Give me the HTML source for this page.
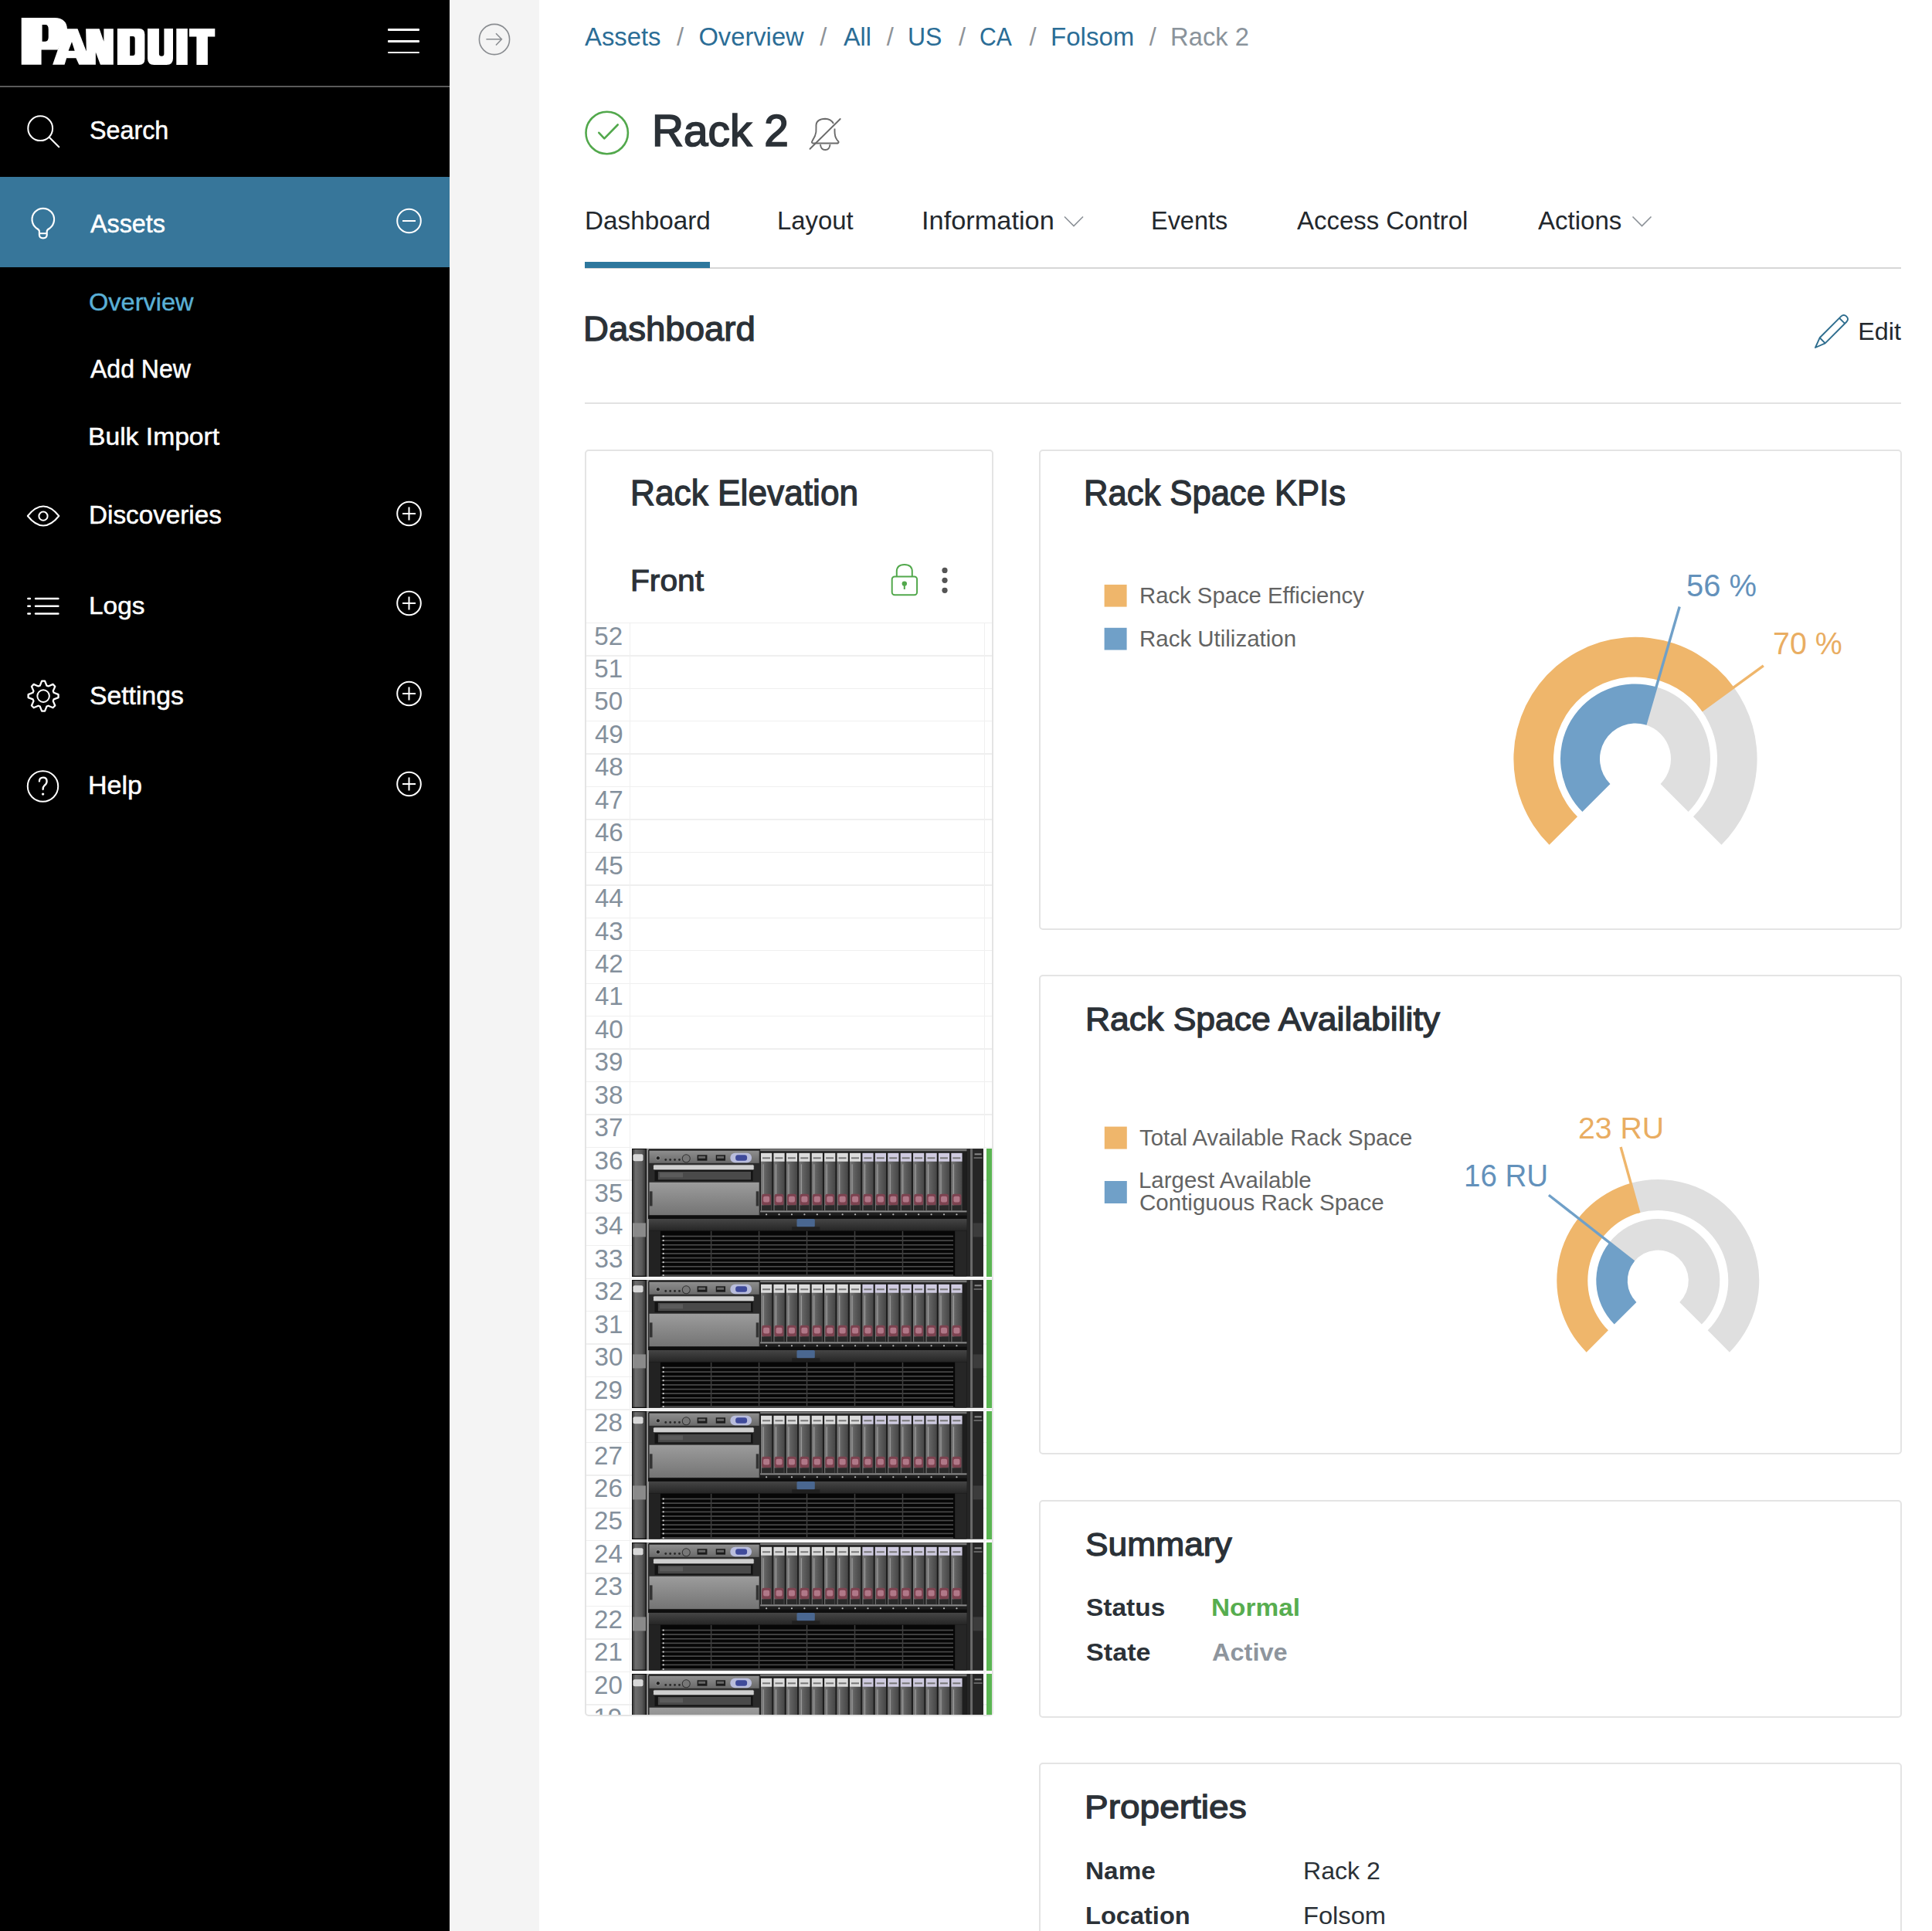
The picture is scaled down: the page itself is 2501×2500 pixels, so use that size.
<!DOCTYPE html>
<html><head><meta charset="utf-8"><title>Rack 2 - Dashboard</title>
<style>
html,body{margin:0;padding:0;}
body{width:2501px;height:2500px;position:relative;overflow:hidden;background:#fff;font-family:"Liberation Sans",sans-serif;}
.t{position:absolute;white-space:nowrap;transform-origin:0 0;}
.r{position:absolute;}
.ov{position:absolute;left:0;top:0;overflow:visible;}
.card{position:absolute;box-sizing:border-box;border:2px solid #e4e4e4;border-radius:5px;background:#fff;}
</style></head><body>
<div class="r" style="left:0.00px;top:0.00px;width:582.00px;height:2500.00px;background:#000;"></div>
<div class="r" style="left:582.00px;top:0.00px;width:116.30px;height:2500.00px;background:#f4f4f4;"></div>
<svg class="ov" width="2501" height="2500" viewBox="0 0 2501 2500"><g fill="#fff">
<path fill-rule="evenodd" d="M27.7,23 H70.8 Q86.5,23.5 87,37.5 L74.8,64.4 H53.6 V83.8 H27.7 Z M54.6,32.1 H58.7 Q62.7,32.1 62.7,38 V48 Q62.7,53.7 58.7,53.7 H54.6 Z"/>
<path d="M68.1,83.8 L84.2,37.2 H146.8 V83.8 Z"/>
<path fill-rule="evenodd" d="M151.9,37 H180 Q187.4,37 187.4,44.5 V76.5 Q187.4,84 180,84 H151.9 Z M168.2,47 H172 Q174.7,47 174.7,50 V69 Q174.7,72 172,72 H168.2 Z"/>
<path d="M191,37 H205.9 V69.5 Q205.9,72.8 209.2,72.8 Q212.4,72.8 212.4,69.5 V37 H224 V75.5 Q224,84 215.5,84 H199.5 Q191,84 191,75.5 Z"/>
<path d="M228.3,37 H242.8 V84 H228.3 Z"/>
<path d="M245,37 H278.3 V47.4 H268.9 V84 H254.4 V47.4 H245 Z"/>
</g>
<g fill="#000">
<path d="M93,54.3 L88.6,65.8 H96.7 Z"/>
<path d="M83.5,83.9 L86.2,75.2 H98.4 L102.4,83.9 Z"/>
<path d="M100.4,37 H111.1 L111.8,66.5 Z"/>
<path d="M128.6,37 H134.4 V53.7 Z"/>
<path d="M123.9,67.8 V84 H130 Z"/>
</g></svg>
<div class="r" style="left:501.70px;top:37.30px;width:41.20px;height:2.60px;background:#fff;border-radius:1px"></div>
<div class="r" style="left:501.70px;top:52.00px;width:41.20px;height:2.60px;background:#fff;border-radius:1px"></div>
<div class="r" style="left:501.70px;top:66.60px;width:41.20px;height:2.60px;background:#fff;border-radius:1px"></div>
<div class="r" style="left:0.00px;top:110.50px;width:582.00px;height:2.30px;background:#5a5a5a;"></div>
<div class="t" style="left:115.69px;top:152.24px;font-size:33.43px;line-height:33.43px;color:#fff;font-weight:400;transform:scaleX(0.9660);-webkit-text-stroke:0.50px #fff;">Search</div>
<div class="r" style="left:0.00px;top:229.00px;width:582.00px;height:117.20px;background:#37769a;"></div>
<div class="t" style="left:116.86px;top:272.51px;font-size:32.99px;line-height:32.99px;color:#fff;font-weight:400;transform:scaleX(0.9792);-webkit-text-stroke:0.50px #fff;">Assets</div>
<div class="t" style="left:115.36px;top:375.08px;font-size:32.27px;line-height:32.27px;color:#5ab0d6;font-weight:400;transform:scaleX(1.0081);-webkit-text-stroke:0.40px #5ab0d6;">Overview</div>
<div class="t" style="left:116.86px;top:462.06px;font-size:32.70px;line-height:32.70px;color:#fff;font-weight:400;transform:scaleX(0.9790);-webkit-text-stroke:0.50px #fff;">Add New</div>
<div class="t" style="left:114.19px;top:550.04px;font-size:31.54px;line-height:31.54px;color:#fff;font-weight:400;transform:scaleX(1.0669);-webkit-text-stroke:0.50px #fff;">Bulk Import</div>
<div class="t" style="left:114.51px;top:651.06px;font-size:32.70px;line-height:32.70px;color:#fff;font-weight:400;transform:scaleX(1.0172);-webkit-text-stroke:0.50px #fff;">Discoveries</div>
<div class="t" style="left:114.50px;top:768.13px;font-size:32.27px;line-height:32.27px;color:#fff;font-weight:400;transform:scaleX(1.0353);-webkit-text-stroke:0.50px #fff;">Logs</div>
<div class="t" style="left:115.74px;top:883.97px;font-size:33.29px;line-height:33.29px;color:#fff;font-weight:400;transform:scaleX(1.0129);-webkit-text-stroke:0.50px #fff;">Settings</div>
<div class="t" style="left:114.45px;top:1001.11px;font-size:32.41px;line-height:32.41px;color:#fff;font-weight:400;transform:scaleX(1.0501);-webkit-text-stroke:0.50px #fff;">Help</div>
<svg class="ov" width="2501" height="2500" viewBox="0 0 2501 2500"><circle cx="52.2" cy="166.2" r="15.9" fill="none" stroke="#fff" stroke-width="2"/><line x1="64.3" y1="178.3" x2="76.3" y2="190.3" stroke="#fff" stroke-width="2" stroke-linecap="round"/><path d="M50.9,304 V299.5 Q50.9,297.6 47.6,295.8 A14.3,14.3 0 1 1 64,295.8 Q60.7,297.6 60.7,299.5 V304 Q60.7,308.3 55.8,308.3 Q50.9,308.3 50.9,304 Z" fill="none" stroke="#fff" stroke-width="2.2" stroke-linejoin="round"/><line x1="50.9" y1="302.2" x2="60.7" y2="302.2" stroke="#fff" stroke-width="2"/><circle cx="529.5" cy="286" r="15.3" fill="none" stroke="#fff" stroke-width="2"/><line x1="521" y1="286" x2="538" y2="286" stroke="#fff" stroke-width="2"/><circle cx="529.5" cy="665" r="15.3" fill="none" stroke="#fff" stroke-width="2"/><line x1="521" y1="665" x2="538" y2="665" stroke="#fff" stroke-width="2"/><line x1="529.5" y1="656.5" x2="529.5" y2="673.5" stroke="#fff" stroke-width="2"/><circle cx="529.5" cy="781" r="15.3" fill="none" stroke="#fff" stroke-width="2"/><line x1="521" y1="781" x2="538" y2="781" stroke="#fff" stroke-width="2"/><line x1="529.5" y1="772.5" x2="529.5" y2="789.5" stroke="#fff" stroke-width="2"/><circle cx="529.5" cy="898" r="15.3" fill="none" stroke="#fff" stroke-width="2"/><line x1="521" y1="898" x2="538" y2="898" stroke="#fff" stroke-width="2"/><line x1="529.5" y1="889.5" x2="529.5" y2="906.5" stroke="#fff" stroke-width="2"/><circle cx="529.5" cy="1015" r="15.3" fill="none" stroke="#fff" stroke-width="2"/><line x1="521" y1="1015" x2="538" y2="1015" stroke="#fff" stroke-width="2"/><line x1="529.5" y1="1006.5" x2="529.5" y2="1023.5" stroke="#fff" stroke-width="2"/><path d="M35.8,668 Q56,643 76.3,668 Q56,693 35.8,668 Z" fill="none" stroke="#fff" stroke-width="2" stroke-linejoin="round"/><circle cx="56" cy="668.2" r="5.6" fill="none" stroke="#fff" stroke-width="2"/><line x1="36.3" y1="775" x2="38.9" y2="775" stroke="#fff" stroke-width="2.4" stroke-linecap="round"/><line x1="46" y1="775" x2="75.4" y2="775" stroke="#fff" stroke-width="2.4" stroke-linecap="round"/><line x1="36.3" y1="784.7" x2="38.9" y2="784.7" stroke="#fff" stroke-width="2.4" stroke-linecap="round"/><line x1="46" y1="784.7" x2="75.4" y2="784.7" stroke="#fff" stroke-width="2.4" stroke-linecap="round"/><line x1="36.3" y1="794.5" x2="38.9" y2="794.5" stroke="#fff" stroke-width="2.4" stroke-linecap="round"/><line x1="46" y1="794.5" x2="75.4" y2="794.5" stroke="#fff" stroke-width="2.4" stroke-linecap="round"/><polygon points="51.77,887.58 54.14,881.60 58.06,881.60 60.43,887.58 62.60,888.47 68.51,885.93 71.27,888.69 68.73,894.60 69.62,896.77 75.60,899.14 75.60,903.06 69.62,905.43 68.73,907.60 71.27,913.51 68.51,916.27 62.60,913.73 60.43,914.62 58.06,920.60 54.14,920.60 51.77,914.62 49.60,913.73 43.69,916.27 40.93,913.51 43.47,907.60 42.58,905.43 36.60,903.06 36.60,899.14 42.58,896.77 43.47,894.60 40.93,888.69 43.69,885.93 49.60,888.47" fill="none" stroke="#fff" stroke-width="2.3" stroke-linejoin="round"/><circle cx="56.1" cy="901.1" r="7.8" fill="none" stroke="#fff" stroke-width="2"/><circle cx="55.5" cy="1018" r="19.7" fill="none" stroke="#fff" stroke-width="2"/><path d="M50.9,1011.6 Q51,1006.7 55.8,1006.7 Q60.6,1006.7 60.6,1011.5 Q60.6,1014.6 57.6,1016.9 Q55.6,1018.6 55.6,1022" fill="none" stroke="#fff" stroke-width="2.3" stroke-linecap="round"/><circle cx="55.6" cy="1028.1" r="1.7" fill="#fff"/><circle cx="640" cy="51" r="19.6" fill="none" stroke="#8a8d91" stroke-width="1.6"/><path d="M629.4,50.8 H649.4 M642,43.3 L649.4,50.8 L642,58.5" fill="none" stroke="#8a8d91" stroke-width="1.6"/></svg>
<div class="t" style="left:756.82px;top:31.61px;font-size:32.70px;line-height:32.70px;color:#2b6d96;font-weight:400;transform:scaleX(1.0043);">Assets</div>
<div class="t" style="left:904.45px;top:31.61px;font-size:32.70px;line-height:32.70px;color:#2b6d96;font-weight:400;">Overview</div>
<div class="t" style="left:1091.72px;top:31.61px;font-size:32.70px;line-height:32.70px;color:#2b6d96;font-weight:400;transform:scaleX(0.9884);">All</div>
<div class="t" style="left:1174.52px;top:31.61px;font-size:32.70px;line-height:32.70px;color:#2b6d96;font-weight:400;transform:scaleX(0.9794);">US</div>
<div class="t" style="left:1267.89px;top:31.61px;font-size:32.70px;line-height:32.70px;color:#2b6d96;font-weight:400;transform:scaleX(0.9213);">CA</div>
<div class="t" style="left:1359.77px;top:31.61px;font-size:32.70px;line-height:32.70px;color:#2b6d96;font-weight:400;transform:scaleX(1.0111);">Folsom</div>
<div class="t" style="left:876.00px;top:31.61px;font-size:32.70px;line-height:32.70px;color:#8e9398;font-weight:400;">/</div>
<div class="t" style="left:1061.30px;top:31.61px;font-size:32.70px;line-height:32.70px;color:#8e9398;font-weight:400;">/</div>
<div class="t" style="left:1147.70px;top:31.61px;font-size:32.70px;line-height:32.70px;color:#8e9398;font-weight:400;">/</div>
<div class="t" style="left:1240.90px;top:31.61px;font-size:32.70px;line-height:32.70px;color:#8e9398;font-weight:400;">/</div>
<div class="t" style="left:1332.50px;top:31.61px;font-size:32.70px;line-height:32.70px;color:#8e9398;font-weight:400;">/</div>
<div class="t" style="left:1487.80px;top:31.61px;font-size:32.70px;line-height:32.70px;color:#8e9398;font-weight:400;">/</div>
<div class="t" style="left:1515.10px;top:31.61px;font-size:32.70px;line-height:32.70px;color:#8a939b;font-weight:400;">Rack 2</div>
<div class="t" style="left:843.55px;top:141.09px;font-size:57.70px;line-height:57.70px;color:#2b3137;font-weight:400;transform:scaleX(0.9844);-webkit-text-stroke:1.70px #2b3137;">Rack 2</div>
<div class="t" style="left:756.65px;top:269.81px;font-size:32.70px;line-height:32.70px;color:#23282d;font-weight:400;transform:scaleX(1.0175);">Dashboard</div>
<div class="t" style="left:1006.49px;top:269.81px;font-size:32.70px;line-height:32.70px;color:#23282d;font-weight:400;transform:scaleX(1.0047);">Layout</div>
<div class="t" style="left:1192.82px;top:269.81px;font-size:32.70px;line-height:32.70px;color:#23282d;font-weight:400;transform:scaleX(1.0503);">Information</div>
<div class="t" style="left:1490.32px;top:269.81px;font-size:32.70px;line-height:32.70px;color:#23282d;font-weight:400;transform:scaleX(0.9922);">Events</div>
<div class="t" style="left:1679.22px;top:269.81px;font-size:32.70px;line-height:32.70px;color:#23282d;font-weight:400;transform:scaleX(1.0071);">Access Control</div>
<div class="t" style="left:1990.82px;top:269.81px;font-size:32.70px;line-height:32.70px;color:#23282d;font-weight:400;transform:scaleX(1.0100);">Actions</div>
<div class="r" style="left:757.00px;top:346.00px;width:1704.00px;height:2.20px;background:#d6d6d6;"></div>
<div class="r" style="left:757.00px;top:339.00px;width:162.30px;height:7.50px;background:#2d779d;"></div>
<div class="t" style="left:754.90px;top:404.32px;font-size:44.91px;line-height:44.91px;color:#2b3137;font-weight:400;transform:scaleX(1.0144);-webkit-text-stroke:1.30px #2b3137;">Dashboard</div>
<div class="t" style="left:2405.33px;top:413.08px;font-size:32.27px;line-height:32.27px;color:#23282d;font-weight:400;">Edit</div>
<div class="r" style="left:757.00px;top:521.00px;width:1704.00px;height:2.00px;background:#e2e2e2;"></div>
<svg class="ov" width="2501" height="2500" viewBox="0 0 2501 2500"><circle cx="785.7" cy="172" r="27.2" fill="none" stroke="#52a84c" stroke-width="2.6"/><path d="M775.3,171.8 L782.3,179.3 L799.7,161.5" fill="none" stroke="#52a84c" stroke-width="2.6" stroke-linecap="round" stroke-linejoin="round"/><path d="M1084.5,185.5 H1052.5 Q1050,185 1051.5,182.5 L1055,176 Q1057,171 1056.5,165 V162 Q1057,154 1068.3,153.8 Q1075.5,154 1079,160" fill="none" stroke="#6b6b6b" stroke-width="1.9" stroke-linejoin="round"/><path d="M1080.5,166.5 V170 Q1080.5,177 1083.5,181 L1085.5,183.5 Q1086,185.5 1083.5,185.5" fill="none" stroke="#6b6b6b" stroke-width="1.9"/><path d="M1062,187 Q1062.5,194 1068.3,194 Q1074,194 1074.5,187" fill="none" stroke="#6b6b6b" stroke-width="1.9"/><line x1="1048.5" y1="192.8" x2="1087.7" y2="154" stroke="#6b6b6b" stroke-width="1.9" stroke-linecap="round"/><path d="M1378.0,280.5 L1390.0,292.5 L1402.0,280.5" fill="none" stroke="#8b9197" stroke-width="1.6"/><path d="M2113.5,280.5 L2125.5,292.5 L2137.5,280.5" fill="none" stroke="#8b9197" stroke-width="1.6"/><g transform="translate(2350,450) rotate(-45)"><path d="M0,0 L13,-5 H52 Q57,-5 57,0 Q57,5 52,5 H13 Z" fill="none" stroke="#2e6d8e" stroke-width="1.9" stroke-linejoin="round"/><line x1="13" y1="-5" x2="13" y2="5" stroke="#2e6d8e" stroke-width="1.9"/><line x1="49" y1="-5" x2="49" y2="5" stroke="#2e6d8e" stroke-width="1.9"/></g></svg>
<div class="card" style="left:756.6px;top:582.2px;width:529.6px;height:1639.8px;"></div>
<div class="card" style="left:1344.9px;top:582.2px;width:1117.2px;height:621.4px;"></div>
<div class="card" style="left:1344.9px;top:1262.4px;width:1117.2px;height:621.1px;"></div>
<div class="card" style="left:1344.9px;top:1941.8px;width:1117.2px;height:282.2px;"></div>
<div class="card" style="left:1344.9px;top:2282.0px;width:1117.2px;height:318.0px;"></div>
<div class="t" style="left:815.68px;top:616.45px;font-size:45.35px;line-height:45.35px;color:#2b3137;font-weight:400;transform:scaleX(0.9758);-webkit-text-stroke:1.30px #2b3137;">Rack Elevation</div>
<div class="t" style="left:815.91px;top:732.97px;font-size:38.95px;line-height:38.95px;color:#2b3137;font-weight:400;transform:scaleX(1.0457);-webkit-text-stroke:1.10px #2b3137;">Front</div>
<svg class="ov" width="2501" height="2500" viewBox="0 0 2501 2500"><rect x="1154.7" y="746.4" width="32.4" height="23.8" rx="3.5" fill="none" stroke="#52a84c" stroke-width="2"/><path d="M1160.8,746 V740 Q1160.8,731 1170.8,731 Q1180.8,731 1180.8,740 V746" fill="none" stroke="#52a84c" stroke-width="2"/><circle cx="1170.8" cy="755.6" r="3.2" fill="#52a84c"/><line x1="1170.8" y1="756" x2="1170.8" y2="763" stroke="#52a84c" stroke-width="2"/><circle cx="1223" cy="738.4" r="3.6" fill="#555"/><circle cx="1223" cy="751.3" r="3.6" fill="#555"/><circle cx="1223" cy="764.3" r="3.6" fill="#555"/></svg>
<div style="position:absolute;left:759px;top:805.5px;width:525px;height:1414.5px;overflow:hidden;"><div class="r" style="left:0;top:0.20px;width:525px;height:1.4px;background:#efefef"></div><div class="r" style="left:0;top:42.64px;width:525px;height:1.4px;background:#efefef"></div><div class="r" style="left:0;top:85.08px;width:525px;height:1.4px;background:#efefef"></div><div class="r" style="left:0;top:127.52px;width:525px;height:1.4px;background:#efefef"></div><div class="r" style="left:0;top:169.96px;width:525px;height:1.4px;background:#efefef"></div><div class="r" style="left:0;top:212.40px;width:525px;height:1.4px;background:#efefef"></div><div class="r" style="left:0;top:254.84px;width:525px;height:1.4px;background:#efefef"></div><div class="r" style="left:0;top:297.28px;width:525px;height:1.4px;background:#efefef"></div><div class="r" style="left:0;top:339.72px;width:525px;height:1.4px;background:#efefef"></div><div class="r" style="left:0;top:382.16px;width:525px;height:1.4px;background:#efefef"></div><div class="r" style="left:0;top:424.60px;width:525px;height:1.4px;background:#efefef"></div><div class="r" style="left:0;top:467.04px;width:525px;height:1.4px;background:#efefef"></div><div class="r" style="left:0;top:509.48px;width:525px;height:1.4px;background:#efefef"></div><div class="r" style="left:0;top:551.92px;width:525px;height:1.4px;background:#efefef"></div><div class="r" style="left:0;top:594.36px;width:525px;height:1.4px;background:#efefef"></div><div class="r" style="left:0;top:636.80px;width:525px;height:1.4px;background:#efefef"></div><div class="r" style="left:0;top:679.24px;width:525px;height:1.4px;background:#efefef"></div><div class="r" style="left:0;top:721.68px;width:525px;height:1.4px;background:#efefef"></div><div class="r" style="left:0;top:764.12px;width:525px;height:1.4px;background:#efefef"></div><div class="r" style="left:0;top:806.56px;width:525px;height:1.4px;background:#efefef"></div><div class="r" style="left:0;top:849.00px;width:525px;height:1.4px;background:#efefef"></div><div class="r" style="left:0;top:891.44px;width:525px;height:1.4px;background:#efefef"></div><div class="r" style="left:0;top:933.88px;width:525px;height:1.4px;background:#efefef"></div><div class="r" style="left:0;top:976.32px;width:525px;height:1.4px;background:#efefef"></div><div class="r" style="left:0;top:1018.76px;width:525px;height:1.4px;background:#efefef"></div><div class="r" style="left:0;top:1061.20px;width:525px;height:1.4px;background:#efefef"></div><div class="r" style="left:0;top:1103.64px;width:525px;height:1.4px;background:#efefef"></div><div class="r" style="left:0;top:1146.08px;width:525px;height:1.4px;background:#efefef"></div><div class="r" style="left:0;top:1188.52px;width:525px;height:1.4px;background:#efefef"></div><div class="r" style="left:0;top:1230.96px;width:525px;height:1.4px;background:#efefef"></div><div class="r" style="left:0;top:1273.40px;width:525px;height:1.4px;background:#efefef"></div><div class="r" style="left:0;top:1315.84px;width:525px;height:1.4px;background:#efefef"></div><div class="r" style="left:0;top:1358.28px;width:525px;height:1.4px;background:#efefef"></div><div class="r" style="left:0;top:1400.72px;width:525px;height:1.4px;background:#efefef"></div><div class="r" style="left:0;top:1443.16px;width:525px;height:1.4px;background:#efefef"></div><div class="r" style="left:0;top:1485.60px;width:525px;height:1.4px;background:#efefef"></div><div class="r" style="left:0;top:1528.04px;width:525px;height:1.4px;background:#efefef"></div><div class="r" style="left:0;top:1570.48px;width:525px;height:1.4px;background:#efefef"></div><div class="r" style="left:0;top:1612.92px;width:525px;height:1.4px;background:#efefef"></div><div class="r" style="left:0;top:1655.36px;width:525px;height:1.4px;background:#efefef"></div><div class="r" style="left:55.8px;top:0;width:1.4px;height:2000px;background:#f0f0f0"></div><div class="r" style="left:515px;top:0;width:1.4px;height:2000px;background:#f0f0f0"></div>
<div class="t" style="left:10.37px;top:1.04px;font-size:33.14px;line-height:33.14px;color:#84909c;font-weight:400;">52</div>
<div class="t" style="left:10.37px;top:43.48px;font-size:33.14px;line-height:33.14px;color:#84909c;font-weight:400;">51</div>
<div class="t" style="left:10.37px;top:85.92px;font-size:33.14px;line-height:33.14px;color:#84909c;font-weight:400;">50</div>
<div class="t" style="left:10.95px;top:128.36px;font-size:33.14px;line-height:33.14px;color:#84909c;font-weight:400;">49</div>
<div class="t" style="left:10.95px;top:170.80px;font-size:33.14px;line-height:33.14px;color:#84909c;font-weight:400;">48</div>
<div class="t" style="left:10.95px;top:213.24px;font-size:33.14px;line-height:33.14px;color:#84909c;font-weight:400;">47</div>
<div class="t" style="left:10.95px;top:255.68px;font-size:33.14px;line-height:33.14px;color:#84909c;font-weight:400;">46</div>
<div class="t" style="left:10.95px;top:298.12px;font-size:33.14px;line-height:33.14px;color:#84909c;font-weight:400;">45</div>
<div class="t" style="left:10.95px;top:340.56px;font-size:33.14px;line-height:33.14px;color:#84909c;font-weight:400;">44</div>
<div class="t" style="left:10.95px;top:383.00px;font-size:33.14px;line-height:33.14px;color:#84909c;font-weight:400;">43</div>
<div class="t" style="left:10.95px;top:425.44px;font-size:33.14px;line-height:33.14px;color:#84909c;font-weight:400;">42</div>
<div class="t" style="left:10.95px;top:467.88px;font-size:33.14px;line-height:33.14px;color:#84909c;font-weight:400;">41</div>
<div class="t" style="left:10.95px;top:510.32px;font-size:33.14px;line-height:33.14px;color:#84909c;font-weight:400;">40</div>
<div class="t" style="left:10.46px;top:552.76px;font-size:33.14px;line-height:33.14px;color:#84909c;font-weight:400;">39</div>
<div class="t" style="left:10.46px;top:595.20px;font-size:33.14px;line-height:33.14px;color:#84909c;font-weight:400;">38</div>
<div class="t" style="left:10.46px;top:637.64px;font-size:33.14px;line-height:33.14px;color:#84909c;font-weight:400;">37</div>
<div class="t" style="left:10.46px;top:680.08px;font-size:33.14px;line-height:33.14px;color:#84909c;font-weight:400;">36</div>
<div class="t" style="left:10.46px;top:722.52px;font-size:33.14px;line-height:33.14px;color:#84909c;font-weight:400;">35</div>
<div class="t" style="left:10.46px;top:764.96px;font-size:33.14px;line-height:33.14px;color:#84909c;font-weight:400;">34</div>
<div class="t" style="left:10.46px;top:807.40px;font-size:33.14px;line-height:33.14px;color:#84909c;font-weight:400;">33</div>
<div class="t" style="left:10.46px;top:849.84px;font-size:33.14px;line-height:33.14px;color:#84909c;font-weight:400;">32</div>
<div class="t" style="left:10.46px;top:892.28px;font-size:33.14px;line-height:33.14px;color:#84909c;font-weight:400;">31</div>
<div class="t" style="left:10.46px;top:934.72px;font-size:33.14px;line-height:33.14px;color:#84909c;font-weight:400;">30</div>
<div class="t" style="left:10.04px;top:977.16px;font-size:33.14px;line-height:33.14px;color:#84909c;font-weight:400;">29</div>
<div class="t" style="left:10.04px;top:1019.60px;font-size:33.14px;line-height:33.14px;color:#84909c;font-weight:400;">28</div>
<div class="t" style="left:10.04px;top:1062.04px;font-size:33.14px;line-height:33.14px;color:#84909c;font-weight:400;">27</div>
<div class="t" style="left:10.04px;top:1104.48px;font-size:33.14px;line-height:33.14px;color:#84909c;font-weight:400;">26</div>
<div class="t" style="left:10.04px;top:1146.92px;font-size:33.14px;line-height:33.14px;color:#84909c;font-weight:400;">25</div>
<div class="t" style="left:10.04px;top:1189.36px;font-size:33.14px;line-height:33.14px;color:#84909c;font-weight:400;">24</div>
<div class="t" style="left:10.04px;top:1231.80px;font-size:33.14px;line-height:33.14px;color:#84909c;font-weight:400;">23</div>
<div class="t" style="left:10.04px;top:1274.24px;font-size:33.14px;line-height:33.14px;color:#84909c;font-weight:400;">22</div>
<div class="t" style="left:10.04px;top:1316.68px;font-size:33.14px;line-height:33.14px;color:#84909c;font-weight:400;">21</div>
<div class="t" style="left:10.04px;top:1359.12px;font-size:33.14px;line-height:33.14px;color:#84909c;font-weight:400;">20</div>
<div class="t" style="left:9.21px;top:1401.56px;font-size:33.14px;line-height:33.14px;color:#84909c;font-weight:400;">19</div>
<div class="t" style="left:9.21px;top:1444.00px;font-size:33.14px;line-height:33.14px;color:#84909c;font-weight:400;">18</div>
<svg class="r" style="left:58.5px;top:681.30px" width="455.6" height="165.8" viewBox="0 0 455 165"><defs><linearGradient id="gEar" x1="0" x2="1" y1="0" y2="0"><stop offset="0" stop-color="#2a2a2a"/><stop offset="0.25" stop-color="#6e6e6e"/><stop offset="0.7" stop-color="#5a5a5a"/><stop offset="1" stop-color="#2e2e2e"/></linearGradient><linearGradient id="gBlank" x1="0" x2="0" y1="0" y2="1"><stop offset="0" stop-color="#9c9c9c"/><stop offset="1" stop-color="#747474"/></linearGradient><linearGradient id="gCtrl" x1="0" x2="0" y1="0" y2="1"><stop offset="0" stop-color="#8e8e8e"/><stop offset="1" stop-color="#6a6a6a"/></linearGradient><linearGradient id="gDrive" x1="0" x2="1" y1="0" y2="0"><stop offset="0" stop-color="#7a7a7a"/><stop offset="0.45" stop-color="#5e5e5e"/><stop offset="1" stop-color="#464646"/></linearGradient><linearGradient id="gBand" x1="0" x2="0" y1="0" y2="1"><stop offset="0" stop-color="#454545"/><stop offset="1" stop-color="#262626"/></linearGradient></defs><rect x="0" y="0" width="455" height="165" fill="#161616"/><rect x="0" y="0" width="18.5" height="165" fill="url(#gEar)"/><rect x="0" y="0" width="18.5" height="165" fill="none" stroke="#111" stroke-width="1.6"/><rect x="1.5" y="7" width="13" height="9" rx="2" fill="#d8d8d8"/><rect x="1" y="96" width="17" height="18" fill="#8a8a8a"/><rect x="19" y="0" width="3" height="165" fill="#8e8e8e"/><rect x="433" y="0" width="22" height="165" fill="#262626"/><rect x="437.5" y="0" width="3" height="165" fill="#6a6a6a"/><rect x="441" y="96" width="13" height="18" fill="#3c3c3c"/><rect x="443" y="6" width="9" height="2" fill="#888"/><rect x="442" y="11" width="11" height="1.5" fill="#777"/><rect x="21" y="1.5" width="145" height="86" fill="#2a2a2a"/><rect x="22.5" y="2.5" width="142" height="16" fill="url(#gCtrl)"/><circle cx="33.8" cy="12" r="2.6" fill="#1e1e1e" stroke="#aaa" stroke-width="0.7"/><circle cx="43.7" cy="14.2" r="1.4" fill="#2a2a2a"/><circle cx="49.6" cy="14.2" r="1.4" fill="#2a2a2a"/><circle cx="55.5" cy="14.2" r="1.4" fill="#2a2a2a"/><circle cx="61.4" cy="14.2" r="1.4" fill="#2a2a2a"/><circle cx="70.2" cy="12.5" r="5" fill="#777" stroke="#333" stroke-width="1"/><rect x="84.5" y="8" width="12.8" height="7.4" fill="#1c1c1c"/><rect x="86" y="9.5" width="9" height="3" fill="#666"/><rect x="108.6" y="8" width="12.3" height="7.4" fill="#1c1c1c"/><rect x="110" y="9.5" width="9" height="3" fill="#666"/><rect x="127.2" y="5.5" width="27.6" height="12.5" rx="6" fill="#b9bddc"/><rect x="134" y="8" width="14.9" height="7.5" rx="3" fill="#3f4a9a"/><rect x="27.5" y="20.5" width="130.5" height="7" rx="1.5" fill="#cfcfcf" stroke="#222" stroke-width="0.8"/><rect x="29.5" y="27.7" width="127" height="14" fill="#141414"/><rect x="33.8" y="29.5" width="120" height="10.5" fill="#4a4a4a"/><rect x="36" y="31" width="30" height="6" fill="#5c5c5c"/><rect x="22.5" y="43.4" width="142" height="42.3" fill="url(#gBlank)"/><rect x="23" y="55" width="3.5" height="19" fill="#333"/><rect x="160.5" y="55" width="3.5" height="19" fill="#333"/><rect x="165.9" y="0.5" width="267" height="87.5" fill="#1e1e1e"/><rect x="165.9" y="0.5" width="267" height="2.5" fill="#777"/><rect x="166.80" y="16.4" width="14.2" height="63.6" fill="url(#gDrive)"/><rect x="166.80" y="5.5" width="14.2" height="11" fill="#dcdcdc"/><rect x="168.80" y="11" width="10" height="2" fill="#777"/><rect x="169.30" y="20" width="1.2" height="56" fill="#9a9a9a"/><rect x="167.90" y="58.5" width="12" height="14.5" rx="3" fill="#7c4350"/><rect x="169.90" y="61.5" width="8" height="7.5" rx="2" fill="#b07888"/><rect x="167.90" y="73" width="12" height="7" fill="#2a2a2a"/><circle cx="173.90" cy="85" r="1.1" fill="#bbb"/><rect x="183.20" y="16.4" width="14.2" height="63.6" fill="url(#gDrive)"/><rect x="183.20" y="5.5" width="14.2" height="11" fill="#dcdcdc"/><rect x="185.20" y="11" width="10" height="2" fill="#777"/><rect x="185.70" y="20" width="1.2" height="56" fill="#9a9a9a"/><rect x="184.30" y="58.5" width="12" height="14.5" rx="3" fill="#7c4350"/><rect x="186.30" y="61.5" width="8" height="7.5" rx="2" fill="#b07888"/><rect x="184.30" y="73" width="12" height="7" fill="#2a2a2a"/><circle cx="190.30" cy="85" r="1.1" fill="#bbb"/><rect x="199.60" y="16.4" width="14.2" height="63.6" fill="url(#gDrive)"/><rect x="199.60" y="5.5" width="14.2" height="11" fill="#dcdcdc"/><rect x="201.60" y="11" width="10" height="2" fill="#777"/><rect x="202.10" y="20" width="1.2" height="56" fill="#9a9a9a"/><rect x="200.70" y="58.5" width="12" height="14.5" rx="3" fill="#7c4350"/><rect x="202.70" y="61.5" width="8" height="7.5" rx="2" fill="#b07888"/><rect x="200.70" y="73" width="12" height="7" fill="#2a2a2a"/><circle cx="206.70" cy="85" r="1.1" fill="#bbb"/><rect x="216.00" y="16.4" width="14.2" height="63.6" fill="url(#gDrive)"/><rect x="216.00" y="5.5" width="14.2" height="11" fill="#dcdcdc"/><rect x="218.00" y="11" width="10" height="2" fill="#777"/><rect x="218.50" y="20" width="1.2" height="56" fill="#9a9a9a"/><rect x="217.10" y="58.5" width="12" height="14.5" rx="3" fill="#7c4350"/><rect x="219.10" y="61.5" width="8" height="7.5" rx="2" fill="#b07888"/><rect x="217.10" y="73" width="12" height="7" fill="#2a2a2a"/><circle cx="223.10" cy="85" r="1.1" fill="#bbb"/><rect x="232.40" y="16.4" width="14.2" height="63.6" fill="url(#gDrive)"/><rect x="232.40" y="5.5" width="14.2" height="11" fill="#dcdcdc"/><rect x="234.40" y="11" width="10" height="2" fill="#777"/><rect x="234.90" y="20" width="1.2" height="56" fill="#9a9a9a"/><rect x="233.50" y="58.5" width="12" height="14.5" rx="3" fill="#7c4350"/><rect x="235.50" y="61.5" width="8" height="7.5" rx="2" fill="#b07888"/><rect x="233.50" y="73" width="12" height="7" fill="#2a2a2a"/><circle cx="239.50" cy="85" r="1.1" fill="#bbb"/><rect x="248.80" y="16.4" width="14.2" height="63.6" fill="url(#gDrive)"/><rect x="248.80" y="5.5" width="14.2" height="11" fill="#dcdcdc"/><rect x="250.80" y="11" width="10" height="2" fill="#777"/><rect x="251.30" y="20" width="1.2" height="56" fill="#9a9a9a"/><rect x="249.90" y="58.5" width="12" height="14.5" rx="3" fill="#7c4350"/><rect x="251.90" y="61.5" width="8" height="7.5" rx="2" fill="#b07888"/><rect x="249.90" y="73" width="12" height="7" fill="#2a2a2a"/><circle cx="255.90" cy="85" r="1.1" fill="#bbb"/><rect x="265.20" y="16.4" width="14.2" height="63.6" fill="url(#gDrive)"/><rect x="265.20" y="5.5" width="14.2" height="11" fill="#dcdcdc"/><rect x="267.20" y="11" width="10" height="2" fill="#777"/><rect x="267.70" y="20" width="1.2" height="56" fill="#9a9a9a"/><rect x="266.30" y="58.5" width="12" height="14.5" rx="3" fill="#7c4350"/><rect x="268.30" y="61.5" width="8" height="7.5" rx="2" fill="#b07888"/><rect x="266.30" y="73" width="12" height="7" fill="#2a2a2a"/><circle cx="272.30" cy="85" r="1.1" fill="#bbb"/><rect x="281.60" y="16.4" width="14.2" height="63.6" fill="url(#gDrive)"/><rect x="281.60" y="5.5" width="14.2" height="11" fill="#dcdcdc"/><rect x="283.60" y="11" width="10" height="2" fill="#777"/><rect x="284.10" y="20" width="1.2" height="56" fill="#9a9a9a"/><rect x="282.70" y="58.5" width="12" height="14.5" rx="3" fill="#7c4350"/><rect x="284.70" y="61.5" width="8" height="7.5" rx="2" fill="#b07888"/><rect x="282.70" y="73" width="12" height="7" fill="#2a2a2a"/><circle cx="288.70" cy="85" r="1.1" fill="#bbb"/><rect x="298.00" y="16.4" width="14.2" height="63.6" fill="url(#gDrive)"/><rect x="298.00" y="5.5" width="14.2" height="11" fill="#cfcbe0"/><rect x="300.00" y="11" width="10" height="2" fill="#777"/><rect x="300.50" y="20" width="1.2" height="56" fill="#9a9a9a"/><rect x="299.10" y="58.5" width="12" height="14.5" rx="3" fill="#7c4350"/><rect x="301.10" y="61.5" width="8" height="7.5" rx="2" fill="#b07888"/><rect x="299.10" y="73" width="12" height="7" fill="#2a2a2a"/><circle cx="305.10" cy="85" r="1.1" fill="#bbb"/><rect x="314.40" y="16.4" width="14.2" height="63.6" fill="url(#gDrive)"/><rect x="314.40" y="5.5" width="14.2" height="11" fill="#cfcbe0"/><rect x="316.40" y="11" width="10" height="2" fill="#777"/><rect x="316.90" y="20" width="1.2" height="56" fill="#9a9a9a"/><rect x="315.50" y="58.5" width="12" height="14.5" rx="3" fill="#7c4350"/><rect x="317.50" y="61.5" width="8" height="7.5" rx="2" fill="#b07888"/><rect x="315.50" y="73" width="12" height="7" fill="#2a2a2a"/><circle cx="321.50" cy="85" r="1.1" fill="#bbb"/><rect x="330.80" y="16.4" width="14.2" height="63.6" fill="url(#gDrive)"/><rect x="330.80" y="5.5" width="14.2" height="11" fill="#cfcbe0"/><rect x="332.80" y="11" width="10" height="2" fill="#777"/><rect x="333.30" y="20" width="1.2" height="56" fill="#9a9a9a"/><rect x="331.90" y="58.5" width="12" height="14.5" rx="3" fill="#7c4350"/><rect x="333.90" y="61.5" width="8" height="7.5" rx="2" fill="#b07888"/><rect x="331.90" y="73" width="12" height="7" fill="#2a2a2a"/><circle cx="337.90" cy="85" r="1.1" fill="#bbb"/><rect x="347.20" y="16.4" width="14.2" height="63.6" fill="url(#gDrive)"/><rect x="347.20" y="5.5" width="14.2" height="11" fill="#cfcbe0"/><rect x="349.20" y="11" width="10" height="2" fill="#777"/><rect x="349.70" y="20" width="1.2" height="56" fill="#9a9a9a"/><rect x="348.30" y="58.5" width="12" height="14.5" rx="3" fill="#7c4350"/><rect x="350.30" y="61.5" width="8" height="7.5" rx="2" fill="#b07888"/><rect x="348.30" y="73" width="12" height="7" fill="#2a2a2a"/><circle cx="354.30" cy="85" r="1.1" fill="#bbb"/><rect x="363.60" y="16.4" width="14.2" height="63.6" fill="url(#gDrive)"/><rect x="363.60" y="5.5" width="14.2" height="11" fill="#cfcbe0"/><rect x="365.60" y="11" width="10" height="2" fill="#777"/><rect x="366.10" y="20" width="1.2" height="56" fill="#9a9a9a"/><rect x="364.70" y="58.5" width="12" height="14.5" rx="3" fill="#7c4350"/><rect x="366.70" y="61.5" width="8" height="7.5" rx="2" fill="#b07888"/><rect x="364.70" y="73" width="12" height="7" fill="#2a2a2a"/><circle cx="370.70" cy="85" r="1.1" fill="#bbb"/><rect x="380.00" y="16.4" width="14.2" height="63.6" fill="url(#gDrive)"/><rect x="380.00" y="5.5" width="14.2" height="11" fill="#cfcbe0"/><rect x="382.00" y="11" width="10" height="2" fill="#777"/><rect x="382.50" y="20" width="1.2" height="56" fill="#9a9a9a"/><rect x="381.10" y="58.5" width="12" height="14.5" rx="3" fill="#7c4350"/><rect x="383.10" y="61.5" width="8" height="7.5" rx="2" fill="#b07888"/><rect x="381.10" y="73" width="12" height="7" fill="#2a2a2a"/><circle cx="387.10" cy="85" r="1.1" fill="#bbb"/><rect x="396.40" y="16.4" width="14.2" height="63.6" fill="url(#gDrive)"/><rect x="396.40" y="5.5" width="14.2" height="11" fill="#cfcbe0"/><rect x="398.40" y="11" width="10" height="2" fill="#777"/><rect x="398.90" y="20" width="1.2" height="56" fill="#9a9a9a"/><rect x="397.50" y="58.5" width="12" height="14.5" rx="3" fill="#7c4350"/><rect x="399.50" y="61.5" width="8" height="7.5" rx="2" fill="#b07888"/><rect x="397.50" y="73" width="12" height="7" fill="#2a2a2a"/><circle cx="403.50" cy="85" r="1.1" fill="#bbb"/><rect x="412.80" y="16.4" width="14.2" height="63.6" fill="url(#gDrive)"/><rect x="412.80" y="5.5" width="14.2" height="11" fill="#cfcbe0"/><rect x="414.80" y="11" width="10" height="2" fill="#777"/><rect x="415.30" y="20" width="1.2" height="56" fill="#9a9a9a"/><rect x="413.90" y="58.5" width="12" height="14.5" rx="3" fill="#7c4350"/><rect x="415.90" y="61.5" width="8" height="7.5" rx="2" fill="#b07888"/><rect x="413.90" y="73" width="12" height="7" fill="#2a2a2a"/><circle cx="419.90" cy="85" r="1.1" fill="#bbb"/><rect x="165.9" y="80" width="267" height="2" fill="#8a8a8a"/><rect x="21" y="86.2" width="412" height="4.5" fill="#0e0e0e"/><rect x="22" y="90.6" width="411" height="15" fill="url(#gBand)"/><rect x="213.2" y="90.6" width="23.3" height="10.5" rx="1.5" fill="#4a6790"/><rect x="207" y="101" width="36" height="5" fill="#202020"/><rect x="22" y="105.6" width="411" height="59.4" fill="#1a1a1a"/><rect x="36.8" y="106.4" width="381" height="57" fill="#060606"/><rect x="38.5" y="112.3" width="377" height="1.6" fill="#4c4c4c"/><circle cx="40.7" cy="113.1" r="1.1" fill="#cfcfcf"/><rect x="38.5" y="117.9" width="377" height="1.6" fill="#4c4c4c"/><circle cx="40.7" cy="118.7" r="1.1" fill="#cfcfcf"/><rect x="38.5" y="123.5" width="377" height="1.6" fill="#4c4c4c"/><circle cx="40.7" cy="124.3" r="1.1" fill="#cfcfcf"/><rect x="38.5" y="129.1" width="377" height="1.6" fill="#4c4c4c"/><circle cx="40.7" cy="129.9" r="1.1" fill="#cfcfcf"/><rect x="38.5" y="134.7" width="377" height="1.6" fill="#4c4c4c"/><circle cx="40.7" cy="135.5" r="1.1" fill="#cfcfcf"/><rect x="38.5" y="140.3" width="377" height="1.6" fill="#4c4c4c"/><circle cx="40.7" cy="141.1" r="1.1" fill="#cfcfcf"/><rect x="38.5" y="145.9" width="377" height="1.6" fill="#4c4c4c"/><circle cx="40.7" cy="146.7" r="1.1" fill="#cfcfcf"/><rect x="38.5" y="151.5" width="377" height="1.6" fill="#4c4c4c"/><circle cx="40.7" cy="152.3" r="1.1" fill="#cfcfcf"/><rect x="38.5" y="157.1" width="377" height="1.6" fill="#4c4c4c"/><circle cx="40.7" cy="157.9" r="1.1" fill="#cfcfcf"/><rect x="38.5" y="162.7" width="377" height="1.6" fill="#4c4c4c"/><circle cx="40.7" cy="163.5" r="1.1" fill="#cfcfcf"/><rect x="101.7" y="106.4" width="1.5" height="57" fill="#3e3e3e"/><rect x="163.6" y="106.4" width="1.5" height="57" fill="#3e3e3e"/><rect x="225.5" y="106.4" width="1.5" height="57" fill="#3e3e3e"/><rect x="287.4" y="106.4" width="1.5" height="57" fill="#3e3e3e"/><rect x="349.3" y="106.4" width="1.5" height="57" fill="#3e3e3e"/><rect x="22" y="106" width="14.8" height="59" fill="#222"/><rect x="417.8" y="106" width="15" height="59" fill="#262626"/></svg>
<div class="r" style="left:518.0px;top:681.30px;width:6.8px;height:165.8px;background:#5ab552"></div>
<svg class="r" style="left:58.5px;top:851.40px" width="455.6" height="165.8" viewBox="0 0 455 165"><defs><linearGradient id="gEar" x1="0" x2="1" y1="0" y2="0"><stop offset="0" stop-color="#2a2a2a"/><stop offset="0.25" stop-color="#6e6e6e"/><stop offset="0.7" stop-color="#5a5a5a"/><stop offset="1" stop-color="#2e2e2e"/></linearGradient><linearGradient id="gBlank" x1="0" x2="0" y1="0" y2="1"><stop offset="0" stop-color="#9c9c9c"/><stop offset="1" stop-color="#747474"/></linearGradient><linearGradient id="gCtrl" x1="0" x2="0" y1="0" y2="1"><stop offset="0" stop-color="#8e8e8e"/><stop offset="1" stop-color="#6a6a6a"/></linearGradient><linearGradient id="gDrive" x1="0" x2="1" y1="0" y2="0"><stop offset="0" stop-color="#7a7a7a"/><stop offset="0.45" stop-color="#5e5e5e"/><stop offset="1" stop-color="#464646"/></linearGradient><linearGradient id="gBand" x1="0" x2="0" y1="0" y2="1"><stop offset="0" stop-color="#454545"/><stop offset="1" stop-color="#262626"/></linearGradient></defs><rect x="0" y="0" width="455" height="165" fill="#161616"/><rect x="0" y="0" width="18.5" height="165" fill="url(#gEar)"/><rect x="0" y="0" width="18.5" height="165" fill="none" stroke="#111" stroke-width="1.6"/><rect x="1.5" y="7" width="13" height="9" rx="2" fill="#d8d8d8"/><rect x="1" y="96" width="17" height="18" fill="#8a8a8a"/><rect x="19" y="0" width="3" height="165" fill="#8e8e8e"/><rect x="433" y="0" width="22" height="165" fill="#262626"/><rect x="437.5" y="0" width="3" height="165" fill="#6a6a6a"/><rect x="441" y="96" width="13" height="18" fill="#3c3c3c"/><rect x="443" y="6" width="9" height="2" fill="#888"/><rect x="442" y="11" width="11" height="1.5" fill="#777"/><rect x="21" y="1.5" width="145" height="86" fill="#2a2a2a"/><rect x="22.5" y="2.5" width="142" height="16" fill="url(#gCtrl)"/><circle cx="33.8" cy="12" r="2.6" fill="#1e1e1e" stroke="#aaa" stroke-width="0.7"/><circle cx="43.7" cy="14.2" r="1.4" fill="#2a2a2a"/><circle cx="49.6" cy="14.2" r="1.4" fill="#2a2a2a"/><circle cx="55.5" cy="14.2" r="1.4" fill="#2a2a2a"/><circle cx="61.4" cy="14.2" r="1.4" fill="#2a2a2a"/><circle cx="70.2" cy="12.5" r="5" fill="#777" stroke="#333" stroke-width="1"/><rect x="84.5" y="8" width="12.8" height="7.4" fill="#1c1c1c"/><rect x="86" y="9.5" width="9" height="3" fill="#666"/><rect x="108.6" y="8" width="12.3" height="7.4" fill="#1c1c1c"/><rect x="110" y="9.5" width="9" height="3" fill="#666"/><rect x="127.2" y="5.5" width="27.6" height="12.5" rx="6" fill="#b9bddc"/><rect x="134" y="8" width="14.9" height="7.5" rx="3" fill="#3f4a9a"/><rect x="27.5" y="20.5" width="130.5" height="7" rx="1.5" fill="#cfcfcf" stroke="#222" stroke-width="0.8"/><rect x="29.5" y="27.7" width="127" height="14" fill="#141414"/><rect x="33.8" y="29.5" width="120" height="10.5" fill="#4a4a4a"/><rect x="36" y="31" width="30" height="6" fill="#5c5c5c"/><rect x="22.5" y="43.4" width="142" height="42.3" fill="url(#gBlank)"/><rect x="23" y="55" width="3.5" height="19" fill="#333"/><rect x="160.5" y="55" width="3.5" height="19" fill="#333"/><rect x="165.9" y="0.5" width="267" height="87.5" fill="#1e1e1e"/><rect x="165.9" y="0.5" width="267" height="2.5" fill="#777"/><rect x="166.80" y="16.4" width="14.2" height="63.6" fill="url(#gDrive)"/><rect x="166.80" y="5.5" width="14.2" height="11" fill="#dcdcdc"/><rect x="168.80" y="11" width="10" height="2" fill="#777"/><rect x="169.30" y="20" width="1.2" height="56" fill="#9a9a9a"/><rect x="167.90" y="58.5" width="12" height="14.5" rx="3" fill="#7c4350"/><rect x="169.90" y="61.5" width="8" height="7.5" rx="2" fill="#b07888"/><rect x="167.90" y="73" width="12" height="7" fill="#2a2a2a"/><circle cx="173.90" cy="85" r="1.1" fill="#bbb"/><rect x="183.20" y="16.4" width="14.2" height="63.6" fill="url(#gDrive)"/><rect x="183.20" y="5.5" width="14.2" height="11" fill="#dcdcdc"/><rect x="185.20" y="11" width="10" height="2" fill="#777"/><rect x="185.70" y="20" width="1.2" height="56" fill="#9a9a9a"/><rect x="184.30" y="58.5" width="12" height="14.5" rx="3" fill="#7c4350"/><rect x="186.30" y="61.5" width="8" height="7.5" rx="2" fill="#b07888"/><rect x="184.30" y="73" width="12" height="7" fill="#2a2a2a"/><circle cx="190.30" cy="85" r="1.1" fill="#bbb"/><rect x="199.60" y="16.4" width="14.2" height="63.6" fill="url(#gDrive)"/><rect x="199.60" y="5.5" width="14.2" height="11" fill="#dcdcdc"/><rect x="201.60" y="11" width="10" height="2" fill="#777"/><rect x="202.10" y="20" width="1.2" height="56" fill="#9a9a9a"/><rect x="200.70" y="58.5" width="12" height="14.5" rx="3" fill="#7c4350"/><rect x="202.70" y="61.5" width="8" height="7.5" rx="2" fill="#b07888"/><rect x="200.70" y="73" width="12" height="7" fill="#2a2a2a"/><circle cx="206.70" cy="85" r="1.1" fill="#bbb"/><rect x="216.00" y="16.4" width="14.2" height="63.6" fill="url(#gDrive)"/><rect x="216.00" y="5.5" width="14.2" height="11" fill="#dcdcdc"/><rect x="218.00" y="11" width="10" height="2" fill="#777"/><rect x="218.50" y="20" width="1.2" height="56" fill="#9a9a9a"/><rect x="217.10" y="58.5" width="12" height="14.5" rx="3" fill="#7c4350"/><rect x="219.10" y="61.5" width="8" height="7.5" rx="2" fill="#b07888"/><rect x="217.10" y="73" width="12" height="7" fill="#2a2a2a"/><circle cx="223.10" cy="85" r="1.1" fill="#bbb"/><rect x="232.40" y="16.4" width="14.2" height="63.6" fill="url(#gDrive)"/><rect x="232.40" y="5.5" width="14.2" height="11" fill="#dcdcdc"/><rect x="234.40" y="11" width="10" height="2" fill="#777"/><rect x="234.90" y="20" width="1.2" height="56" fill="#9a9a9a"/><rect x="233.50" y="58.5" width="12" height="14.5" rx="3" fill="#7c4350"/><rect x="235.50" y="61.5" width="8" height="7.5" rx="2" fill="#b07888"/><rect x="233.50" y="73" width="12" height="7" fill="#2a2a2a"/><circle cx="239.50" cy="85" r="1.1" fill="#bbb"/><rect x="248.80" y="16.4" width="14.2" height="63.6" fill="url(#gDrive)"/><rect x="248.80" y="5.5" width="14.2" height="11" fill="#dcdcdc"/><rect x="250.80" y="11" width="10" height="2" fill="#777"/><rect x="251.30" y="20" width="1.2" height="56" fill="#9a9a9a"/><rect x="249.90" y="58.5" width="12" height="14.5" rx="3" fill="#7c4350"/><rect x="251.90" y="61.5" width="8" height="7.5" rx="2" fill="#b07888"/><rect x="249.90" y="73" width="12" height="7" fill="#2a2a2a"/><circle cx="255.90" cy="85" r="1.1" fill="#bbb"/><rect x="265.20" y="16.4" width="14.2" height="63.6" fill="url(#gDrive)"/><rect x="265.20" y="5.5" width="14.2" height="11" fill="#dcdcdc"/><rect x="267.20" y="11" width="10" height="2" fill="#777"/><rect x="267.70" y="20" width="1.2" height="56" fill="#9a9a9a"/><rect x="266.30" y="58.5" width="12" height="14.5" rx="3" fill="#7c4350"/><rect x="268.30" y="61.5" width="8" height="7.5" rx="2" fill="#b07888"/><rect x="266.30" y="73" width="12" height="7" fill="#2a2a2a"/><circle cx="272.30" cy="85" r="1.1" fill="#bbb"/><rect x="281.60" y="16.4" width="14.2" height="63.6" fill="url(#gDrive)"/><rect x="281.60" y="5.5" width="14.2" height="11" fill="#dcdcdc"/><rect x="283.60" y="11" width="10" height="2" fill="#777"/><rect x="284.10" y="20" width="1.2" height="56" fill="#9a9a9a"/><rect x="282.70" y="58.5" width="12" height="14.5" rx="3" fill="#7c4350"/><rect x="284.70" y="61.5" width="8" height="7.5" rx="2" fill="#b07888"/><rect x="282.70" y="73" width="12" height="7" fill="#2a2a2a"/><circle cx="288.70" cy="85" r="1.1" fill="#bbb"/><rect x="298.00" y="16.4" width="14.2" height="63.6" fill="url(#gDrive)"/><rect x="298.00" y="5.5" width="14.2" height="11" fill="#cfcbe0"/><rect x="300.00" y="11" width="10" height="2" fill="#777"/><rect x="300.50" y="20" width="1.2" height="56" fill="#9a9a9a"/><rect x="299.10" y="58.5" width="12" height="14.5" rx="3" fill="#7c4350"/><rect x="301.10" y="61.5" width="8" height="7.5" rx="2" fill="#b07888"/><rect x="299.10" y="73" width="12" height="7" fill="#2a2a2a"/><circle cx="305.10" cy="85" r="1.1" fill="#bbb"/><rect x="314.40" y="16.4" width="14.2" height="63.6" fill="url(#gDrive)"/><rect x="314.40" y="5.5" width="14.2" height="11" fill="#cfcbe0"/><rect x="316.40" y="11" width="10" height="2" fill="#777"/><rect x="316.90" y="20" width="1.2" height="56" fill="#9a9a9a"/><rect x="315.50" y="58.5" width="12" height="14.5" rx="3" fill="#7c4350"/><rect x="317.50" y="61.5" width="8" height="7.5" rx="2" fill="#b07888"/><rect x="315.50" y="73" width="12" height="7" fill="#2a2a2a"/><circle cx="321.50" cy="85" r="1.1" fill="#bbb"/><rect x="330.80" y="16.4" width="14.2" height="63.6" fill="url(#gDrive)"/><rect x="330.80" y="5.5" width="14.2" height="11" fill="#cfcbe0"/><rect x="332.80" y="11" width="10" height="2" fill="#777"/><rect x="333.30" y="20" width="1.2" height="56" fill="#9a9a9a"/><rect x="331.90" y="58.5" width="12" height="14.5" rx="3" fill="#7c4350"/><rect x="333.90" y="61.5" width="8" height="7.5" rx="2" fill="#b07888"/><rect x="331.90" y="73" width="12" height="7" fill="#2a2a2a"/><circle cx="337.90" cy="85" r="1.1" fill="#bbb"/><rect x="347.20" y="16.4" width="14.2" height="63.6" fill="url(#gDrive)"/><rect x="347.20" y="5.5" width="14.2" height="11" fill="#cfcbe0"/><rect x="349.20" y="11" width="10" height="2" fill="#777"/><rect x="349.70" y="20" width="1.2" height="56" fill="#9a9a9a"/><rect x="348.30" y="58.5" width="12" height="14.5" rx="3" fill="#7c4350"/><rect x="350.30" y="61.5" width="8" height="7.5" rx="2" fill="#b07888"/><rect x="348.30" y="73" width="12" height="7" fill="#2a2a2a"/><circle cx="354.30" cy="85" r="1.1" fill="#bbb"/><rect x="363.60" y="16.4" width="14.2" height="63.6" fill="url(#gDrive)"/><rect x="363.60" y="5.5" width="14.2" height="11" fill="#cfcbe0"/><rect x="365.60" y="11" width="10" height="2" fill="#777"/><rect x="366.10" y="20" width="1.2" height="56" fill="#9a9a9a"/><rect x="364.70" y="58.5" width="12" height="14.5" rx="3" fill="#7c4350"/><rect x="366.70" y="61.5" width="8" height="7.5" rx="2" fill="#b07888"/><rect x="364.70" y="73" width="12" height="7" fill="#2a2a2a"/><circle cx="370.70" cy="85" r="1.1" fill="#bbb"/><rect x="380.00" y="16.4" width="14.2" height="63.6" fill="url(#gDrive)"/><rect x="380.00" y="5.5" width="14.2" height="11" fill="#cfcbe0"/><rect x="382.00" y="11" width="10" height="2" fill="#777"/><rect x="382.50" y="20" width="1.2" height="56" fill="#9a9a9a"/><rect x="381.10" y="58.5" width="12" height="14.5" rx="3" fill="#7c4350"/><rect x="383.10" y="61.5" width="8" height="7.5" rx="2" fill="#b07888"/><rect x="381.10" y="73" width="12" height="7" fill="#2a2a2a"/><circle cx="387.10" cy="85" r="1.1" fill="#bbb"/><rect x="396.40" y="16.4" width="14.2" height="63.6" fill="url(#gDrive)"/><rect x="396.40" y="5.5" width="14.2" height="11" fill="#cfcbe0"/><rect x="398.40" y="11" width="10" height="2" fill="#777"/><rect x="398.90" y="20" width="1.2" height="56" fill="#9a9a9a"/><rect x="397.50" y="58.5" width="12" height="14.5" rx="3" fill="#7c4350"/><rect x="399.50" y="61.5" width="8" height="7.5" rx="2" fill="#b07888"/><rect x="397.50" y="73" width="12" height="7" fill="#2a2a2a"/><circle cx="403.50" cy="85" r="1.1" fill="#bbb"/><rect x="412.80" y="16.4" width="14.2" height="63.6" fill="url(#gDrive)"/><rect x="412.80" y="5.5" width="14.2" height="11" fill="#cfcbe0"/><rect x="414.80" y="11" width="10" height="2" fill="#777"/><rect x="415.30" y="20" width="1.2" height="56" fill="#9a9a9a"/><rect x="413.90" y="58.5" width="12" height="14.5" rx="3" fill="#7c4350"/><rect x="415.90" y="61.5" width="8" height="7.5" rx="2" fill="#b07888"/><rect x="413.90" y="73" width="12" height="7" fill="#2a2a2a"/><circle cx="419.90" cy="85" r="1.1" fill="#bbb"/><rect x="165.9" y="80" width="267" height="2" fill="#8a8a8a"/><rect x="21" y="86.2" width="412" height="4.5" fill="#0e0e0e"/><rect x="22" y="90.6" width="411" height="15" fill="url(#gBand)"/><rect x="213.2" y="90.6" width="23.3" height="10.5" rx="1.5" fill="#4a6790"/><rect x="207" y="101" width="36" height="5" fill="#202020"/><rect x="22" y="105.6" width="411" height="59.4" fill="#1a1a1a"/><rect x="36.8" y="106.4" width="381" height="57" fill="#060606"/><rect x="38.5" y="112.3" width="377" height="1.6" fill="#4c4c4c"/><circle cx="40.7" cy="113.1" r="1.1" fill="#cfcfcf"/><rect x="38.5" y="117.9" width="377" height="1.6" fill="#4c4c4c"/><circle cx="40.7" cy="118.7" r="1.1" fill="#cfcfcf"/><rect x="38.5" y="123.5" width="377" height="1.6" fill="#4c4c4c"/><circle cx="40.7" cy="124.3" r="1.1" fill="#cfcfcf"/><rect x="38.5" y="129.1" width="377" height="1.6" fill="#4c4c4c"/><circle cx="40.7" cy="129.9" r="1.1" fill="#cfcfcf"/><rect x="38.5" y="134.7" width="377" height="1.6" fill="#4c4c4c"/><circle cx="40.7" cy="135.5" r="1.1" fill="#cfcfcf"/><rect x="38.5" y="140.3" width="377" height="1.6" fill="#4c4c4c"/><circle cx="40.7" cy="141.1" r="1.1" fill="#cfcfcf"/><rect x="38.5" y="145.9" width="377" height="1.6" fill="#4c4c4c"/><circle cx="40.7" cy="146.7" r="1.1" fill="#cfcfcf"/><rect x="38.5" y="151.5" width="377" height="1.6" fill="#4c4c4c"/><circle cx="40.7" cy="152.3" r="1.1" fill="#cfcfcf"/><rect x="38.5" y="157.1" width="377" height="1.6" fill="#4c4c4c"/><circle cx="40.7" cy="157.9" r="1.1" fill="#cfcfcf"/><rect x="38.5" y="162.7" width="377" height="1.6" fill="#4c4c4c"/><circle cx="40.7" cy="163.5" r="1.1" fill="#cfcfcf"/><rect x="101.7" y="106.4" width="1.5" height="57" fill="#3e3e3e"/><rect x="163.6" y="106.4" width="1.5" height="57" fill="#3e3e3e"/><rect x="225.5" y="106.4" width="1.5" height="57" fill="#3e3e3e"/><rect x="287.4" y="106.4" width="1.5" height="57" fill="#3e3e3e"/><rect x="349.3" y="106.4" width="1.5" height="57" fill="#3e3e3e"/><rect x="22" y="106" width="14.8" height="59" fill="#222"/><rect x="417.8" y="106" width="15" height="59" fill="#262626"/></svg>
<div class="r" style="left:518.0px;top:851.40px;width:6.8px;height:165.8px;background:#5ab552"></div>
<svg class="r" style="left:58.5px;top:1021.50px" width="455.6" height="165.8" viewBox="0 0 455 165"><defs><linearGradient id="gEar" x1="0" x2="1" y1="0" y2="0"><stop offset="0" stop-color="#2a2a2a"/><stop offset="0.25" stop-color="#6e6e6e"/><stop offset="0.7" stop-color="#5a5a5a"/><stop offset="1" stop-color="#2e2e2e"/></linearGradient><linearGradient id="gBlank" x1="0" x2="0" y1="0" y2="1"><stop offset="0" stop-color="#9c9c9c"/><stop offset="1" stop-color="#747474"/></linearGradient><linearGradient id="gCtrl" x1="0" x2="0" y1="0" y2="1"><stop offset="0" stop-color="#8e8e8e"/><stop offset="1" stop-color="#6a6a6a"/></linearGradient><linearGradient id="gDrive" x1="0" x2="1" y1="0" y2="0"><stop offset="0" stop-color="#7a7a7a"/><stop offset="0.45" stop-color="#5e5e5e"/><stop offset="1" stop-color="#464646"/></linearGradient><linearGradient id="gBand" x1="0" x2="0" y1="0" y2="1"><stop offset="0" stop-color="#454545"/><stop offset="1" stop-color="#262626"/></linearGradient></defs><rect x="0" y="0" width="455" height="165" fill="#161616"/><rect x="0" y="0" width="18.5" height="165" fill="url(#gEar)"/><rect x="0" y="0" width="18.5" height="165" fill="none" stroke="#111" stroke-width="1.6"/><rect x="1.5" y="7" width="13" height="9" rx="2" fill="#d8d8d8"/><rect x="1" y="96" width="17" height="18" fill="#8a8a8a"/><rect x="19" y="0" width="3" height="165" fill="#8e8e8e"/><rect x="433" y="0" width="22" height="165" fill="#262626"/><rect x="437.5" y="0" width="3" height="165" fill="#6a6a6a"/><rect x="441" y="96" width="13" height="18" fill="#3c3c3c"/><rect x="443" y="6" width="9" height="2" fill="#888"/><rect x="442" y="11" width="11" height="1.5" fill="#777"/><rect x="21" y="1.5" width="145" height="86" fill="#2a2a2a"/><rect x="22.5" y="2.5" width="142" height="16" fill="url(#gCtrl)"/><circle cx="33.8" cy="12" r="2.6" fill="#1e1e1e" stroke="#aaa" stroke-width="0.7"/><circle cx="43.7" cy="14.2" r="1.4" fill="#2a2a2a"/><circle cx="49.6" cy="14.2" r="1.4" fill="#2a2a2a"/><circle cx="55.5" cy="14.2" r="1.4" fill="#2a2a2a"/><circle cx="61.4" cy="14.2" r="1.4" fill="#2a2a2a"/><circle cx="70.2" cy="12.5" r="5" fill="#777" stroke="#333" stroke-width="1"/><rect x="84.5" y="8" width="12.8" height="7.4" fill="#1c1c1c"/><rect x="86" y="9.5" width="9" height="3" fill="#666"/><rect x="108.6" y="8" width="12.3" height="7.4" fill="#1c1c1c"/><rect x="110" y="9.5" width="9" height="3" fill="#666"/><rect x="127.2" y="5.5" width="27.6" height="12.5" rx="6" fill="#b9bddc"/><rect x="134" y="8" width="14.9" height="7.5" rx="3" fill="#3f4a9a"/><rect x="27.5" y="20.5" width="130.5" height="7" rx="1.5" fill="#cfcfcf" stroke="#222" stroke-width="0.8"/><rect x="29.5" y="27.7" width="127" height="14" fill="#141414"/><rect x="33.8" y="29.5" width="120" height="10.5" fill="#4a4a4a"/><rect x="36" y="31" width="30" height="6" fill="#5c5c5c"/><rect x="22.5" y="43.4" width="142" height="42.3" fill="url(#gBlank)"/><rect x="23" y="55" width="3.5" height="19" fill="#333"/><rect x="160.5" y="55" width="3.5" height="19" fill="#333"/><rect x="165.9" y="0.5" width="267" height="87.5" fill="#1e1e1e"/><rect x="165.9" y="0.5" width="267" height="2.5" fill="#777"/><rect x="166.80" y="16.4" width="14.2" height="63.6" fill="url(#gDrive)"/><rect x="166.80" y="5.5" width="14.2" height="11" fill="#dcdcdc"/><rect x="168.80" y="11" width="10" height="2" fill="#777"/><rect x="169.30" y="20" width="1.2" height="56" fill="#9a9a9a"/><rect x="167.90" y="58.5" width="12" height="14.5" rx="3" fill="#7c4350"/><rect x="169.90" y="61.5" width="8" height="7.5" rx="2" fill="#b07888"/><rect x="167.90" y="73" width="12" height="7" fill="#2a2a2a"/><circle cx="173.90" cy="85" r="1.1" fill="#bbb"/><rect x="183.20" y="16.4" width="14.2" height="63.6" fill="url(#gDrive)"/><rect x="183.20" y="5.5" width="14.2" height="11" fill="#dcdcdc"/><rect x="185.20" y="11" width="10" height="2" fill="#777"/><rect x="185.70" y="20" width="1.2" height="56" fill="#9a9a9a"/><rect x="184.30" y="58.5" width="12" height="14.5" rx="3" fill="#7c4350"/><rect x="186.30" y="61.5" width="8" height="7.5" rx="2" fill="#b07888"/><rect x="184.30" y="73" width="12" height="7" fill="#2a2a2a"/><circle cx="190.30" cy="85" r="1.1" fill="#bbb"/><rect x="199.60" y="16.4" width="14.2" height="63.6" fill="url(#gDrive)"/><rect x="199.60" y="5.5" width="14.2" height="11" fill="#dcdcdc"/><rect x="201.60" y="11" width="10" height="2" fill="#777"/><rect x="202.10" y="20" width="1.2" height="56" fill="#9a9a9a"/><rect x="200.70" y="58.5" width="12" height="14.5" rx="3" fill="#7c4350"/><rect x="202.70" y="61.5" width="8" height="7.5" rx="2" fill="#b07888"/><rect x="200.70" y="73" width="12" height="7" fill="#2a2a2a"/><circle cx="206.70" cy="85" r="1.1" fill="#bbb"/><rect x="216.00" y="16.4" width="14.2" height="63.6" fill="url(#gDrive)"/><rect x="216.00" y="5.5" width="14.2" height="11" fill="#dcdcdc"/><rect x="218.00" y="11" width="10" height="2" fill="#777"/><rect x="218.50" y="20" width="1.2" height="56" fill="#9a9a9a"/><rect x="217.10" y="58.5" width="12" height="14.5" rx="3" fill="#7c4350"/><rect x="219.10" y="61.5" width="8" height="7.5" rx="2" fill="#b07888"/><rect x="217.10" y="73" width="12" height="7" fill="#2a2a2a"/><circle cx="223.10" cy="85" r="1.1" fill="#bbb"/><rect x="232.40" y="16.4" width="14.2" height="63.6" fill="url(#gDrive)"/><rect x="232.40" y="5.5" width="14.2" height="11" fill="#dcdcdc"/><rect x="234.40" y="11" width="10" height="2" fill="#777"/><rect x="234.90" y="20" width="1.2" height="56" fill="#9a9a9a"/><rect x="233.50" y="58.5" width="12" height="14.5" rx="3" fill="#7c4350"/><rect x="235.50" y="61.5" width="8" height="7.5" rx="2" fill="#b07888"/><rect x="233.50" y="73" width="12" height="7" fill="#2a2a2a"/><circle cx="239.50" cy="85" r="1.1" fill="#bbb"/><rect x="248.80" y="16.4" width="14.2" height="63.6" fill="url(#gDrive)"/><rect x="248.80" y="5.5" width="14.2" height="11" fill="#dcdcdc"/><rect x="250.80" y="11" width="10" height="2" fill="#777"/><rect x="251.30" y="20" width="1.2" height="56" fill="#9a9a9a"/><rect x="249.90" y="58.5" width="12" height="14.5" rx="3" fill="#7c4350"/><rect x="251.90" y="61.5" width="8" height="7.5" rx="2" fill="#b07888"/><rect x="249.90" y="73" width="12" height="7" fill="#2a2a2a"/><circle cx="255.90" cy="85" r="1.1" fill="#bbb"/><rect x="265.20" y="16.4" width="14.2" height="63.6" fill="url(#gDrive)"/><rect x="265.20" y="5.5" width="14.2" height="11" fill="#dcdcdc"/><rect x="267.20" y="11" width="10" height="2" fill="#777"/><rect x="267.70" y="20" width="1.2" height="56" fill="#9a9a9a"/><rect x="266.30" y="58.5" width="12" height="14.5" rx="3" fill="#7c4350"/><rect x="268.30" y="61.5" width="8" height="7.5" rx="2" fill="#b07888"/><rect x="266.30" y="73" width="12" height="7" fill="#2a2a2a"/><circle cx="272.30" cy="85" r="1.1" fill="#bbb"/><rect x="281.60" y="16.4" width="14.2" height="63.6" fill="url(#gDrive)"/><rect x="281.60" y="5.5" width="14.2" height="11" fill="#dcdcdc"/><rect x="283.60" y="11" width="10" height="2" fill="#777"/><rect x="284.10" y="20" width="1.2" height="56" fill="#9a9a9a"/><rect x="282.70" y="58.5" width="12" height="14.5" rx="3" fill="#7c4350"/><rect x="284.70" y="61.5" width="8" height="7.5" rx="2" fill="#b07888"/><rect x="282.70" y="73" width="12" height="7" fill="#2a2a2a"/><circle cx="288.70" cy="85" r="1.1" fill="#bbb"/><rect x="298.00" y="16.4" width="14.2" height="63.6" fill="url(#gDrive)"/><rect x="298.00" y="5.5" width="14.2" height="11" fill="#cfcbe0"/><rect x="300.00" y="11" width="10" height="2" fill="#777"/><rect x="300.50" y="20" width="1.2" height="56" fill="#9a9a9a"/><rect x="299.10" y="58.5" width="12" height="14.5" rx="3" fill="#7c4350"/><rect x="301.10" y="61.5" width="8" height="7.5" rx="2" fill="#b07888"/><rect x="299.10" y="73" width="12" height="7" fill="#2a2a2a"/><circle cx="305.10" cy="85" r="1.1" fill="#bbb"/><rect x="314.40" y="16.4" width="14.2" height="63.6" fill="url(#gDrive)"/><rect x="314.40" y="5.5" width="14.2" height="11" fill="#cfcbe0"/><rect x="316.40" y="11" width="10" height="2" fill="#777"/><rect x="316.90" y="20" width="1.2" height="56" fill="#9a9a9a"/><rect x="315.50" y="58.5" width="12" height="14.5" rx="3" fill="#7c4350"/><rect x="317.50" y="61.5" width="8" height="7.5" rx="2" fill="#b07888"/><rect x="315.50" y="73" width="12" height="7" fill="#2a2a2a"/><circle cx="321.50" cy="85" r="1.1" fill="#bbb"/><rect x="330.80" y="16.4" width="14.2" height="63.6" fill="url(#gDrive)"/><rect x="330.80" y="5.5" width="14.2" height="11" fill="#cfcbe0"/><rect x="332.80" y="11" width="10" height="2" fill="#777"/><rect x="333.30" y="20" width="1.2" height="56" fill="#9a9a9a"/><rect x="331.90" y="58.5" width="12" height="14.5" rx="3" fill="#7c4350"/><rect x="333.90" y="61.5" width="8" height="7.5" rx="2" fill="#b07888"/><rect x="331.90" y="73" width="12" height="7" fill="#2a2a2a"/><circle cx="337.90" cy="85" r="1.1" fill="#bbb"/><rect x="347.20" y="16.4" width="14.2" height="63.6" fill="url(#gDrive)"/><rect x="347.20" y="5.5" width="14.2" height="11" fill="#cfcbe0"/><rect x="349.20" y="11" width="10" height="2" fill="#777"/><rect x="349.70" y="20" width="1.2" height="56" fill="#9a9a9a"/><rect x="348.30" y="58.5" width="12" height="14.5" rx="3" fill="#7c4350"/><rect x="350.30" y="61.5" width="8" height="7.5" rx="2" fill="#b07888"/><rect x="348.30" y="73" width="12" height="7" fill="#2a2a2a"/><circle cx="354.30" cy="85" r="1.1" fill="#bbb"/><rect x="363.60" y="16.4" width="14.2" height="63.6" fill="url(#gDrive)"/><rect x="363.60" y="5.5" width="14.2" height="11" fill="#cfcbe0"/><rect x="365.60" y="11" width="10" height="2" fill="#777"/><rect x="366.10" y="20" width="1.2" height="56" fill="#9a9a9a"/><rect x="364.70" y="58.5" width="12" height="14.5" rx="3" fill="#7c4350"/><rect x="366.70" y="61.5" width="8" height="7.5" rx="2" fill="#b07888"/><rect x="364.70" y="73" width="12" height="7" fill="#2a2a2a"/><circle cx="370.70" cy="85" r="1.1" fill="#bbb"/><rect x="380.00" y="16.4" width="14.2" height="63.6" fill="url(#gDrive)"/><rect x="380.00" y="5.5" width="14.2" height="11" fill="#cfcbe0"/><rect x="382.00" y="11" width="10" height="2" fill="#777"/><rect x="382.50" y="20" width="1.2" height="56" fill="#9a9a9a"/><rect x="381.10" y="58.5" width="12" height="14.5" rx="3" fill="#7c4350"/><rect x="383.10" y="61.5" width="8" height="7.5" rx="2" fill="#b07888"/><rect x="381.10" y="73" width="12" height="7" fill="#2a2a2a"/><circle cx="387.10" cy="85" r="1.1" fill="#bbb"/><rect x="396.40" y="16.4" width="14.2" height="63.6" fill="url(#gDrive)"/><rect x="396.40" y="5.5" width="14.2" height="11" fill="#cfcbe0"/><rect x="398.40" y="11" width="10" height="2" fill="#777"/><rect x="398.90" y="20" width="1.2" height="56" fill="#9a9a9a"/><rect x="397.50" y="58.5" width="12" height="14.5" rx="3" fill="#7c4350"/><rect x="399.50" y="61.5" width="8" height="7.5" rx="2" fill="#b07888"/><rect x="397.50" y="73" width="12" height="7" fill="#2a2a2a"/><circle cx="403.50" cy="85" r="1.1" fill="#bbb"/><rect x="412.80" y="16.4" width="14.2" height="63.6" fill="url(#gDrive)"/><rect x="412.80" y="5.5" width="14.2" height="11" fill="#cfcbe0"/><rect x="414.80" y="11" width="10" height="2" fill="#777"/><rect x="415.30" y="20" width="1.2" height="56" fill="#9a9a9a"/><rect x="413.90" y="58.5" width="12" height="14.5" rx="3" fill="#7c4350"/><rect x="415.90" y="61.5" width="8" height="7.5" rx="2" fill="#b07888"/><rect x="413.90" y="73" width="12" height="7" fill="#2a2a2a"/><circle cx="419.90" cy="85" r="1.1" fill="#bbb"/><rect x="165.9" y="80" width="267" height="2" fill="#8a8a8a"/><rect x="21" y="86.2" width="412" height="4.5" fill="#0e0e0e"/><rect x="22" y="90.6" width="411" height="15" fill="url(#gBand)"/><rect x="213.2" y="90.6" width="23.3" height="10.5" rx="1.5" fill="#4a6790"/><rect x="207" y="101" width="36" height="5" fill="#202020"/><rect x="22" y="105.6" width="411" height="59.4" fill="#1a1a1a"/><rect x="36.8" y="106.4" width="381" height="57" fill="#060606"/><rect x="38.5" y="112.3" width="377" height="1.6" fill="#4c4c4c"/><circle cx="40.7" cy="113.1" r="1.1" fill="#cfcfcf"/><rect x="38.5" y="117.9" width="377" height="1.6" fill="#4c4c4c"/><circle cx="40.7" cy="118.7" r="1.1" fill="#cfcfcf"/><rect x="38.5" y="123.5" width="377" height="1.6" fill="#4c4c4c"/><circle cx="40.7" cy="124.3" r="1.1" fill="#cfcfcf"/><rect x="38.5" y="129.1" width="377" height="1.6" fill="#4c4c4c"/><circle cx="40.7" cy="129.9" r="1.1" fill="#cfcfcf"/><rect x="38.5" y="134.7" width="377" height="1.6" fill="#4c4c4c"/><circle cx="40.7" cy="135.5" r="1.1" fill="#cfcfcf"/><rect x="38.5" y="140.3" width="377" height="1.6" fill="#4c4c4c"/><circle cx="40.7" cy="141.1" r="1.1" fill="#cfcfcf"/><rect x="38.5" y="145.9" width="377" height="1.6" fill="#4c4c4c"/><circle cx="40.7" cy="146.7" r="1.1" fill="#cfcfcf"/><rect x="38.5" y="151.5" width="377" height="1.6" fill="#4c4c4c"/><circle cx="40.7" cy="152.3" r="1.1" fill="#cfcfcf"/><rect x="38.5" y="157.1" width="377" height="1.6" fill="#4c4c4c"/><circle cx="40.7" cy="157.9" r="1.1" fill="#cfcfcf"/><rect x="38.5" y="162.7" width="377" height="1.6" fill="#4c4c4c"/><circle cx="40.7" cy="163.5" r="1.1" fill="#cfcfcf"/><rect x="101.7" y="106.4" width="1.5" height="57" fill="#3e3e3e"/><rect x="163.6" y="106.4" width="1.5" height="57" fill="#3e3e3e"/><rect x="225.5" y="106.4" width="1.5" height="57" fill="#3e3e3e"/><rect x="287.4" y="106.4" width="1.5" height="57" fill="#3e3e3e"/><rect x="349.3" y="106.4" width="1.5" height="57" fill="#3e3e3e"/><rect x="22" y="106" width="14.8" height="59" fill="#222"/><rect x="417.8" y="106" width="15" height="59" fill="#262626"/></svg>
<div class="r" style="left:518.0px;top:1021.50px;width:6.8px;height:165.8px;background:#5ab552"></div>
<svg class="r" style="left:58.5px;top:1191.60px" width="455.6" height="165.8" viewBox="0 0 455 165"><defs><linearGradient id="gEar" x1="0" x2="1" y1="0" y2="0"><stop offset="0" stop-color="#2a2a2a"/><stop offset="0.25" stop-color="#6e6e6e"/><stop offset="0.7" stop-color="#5a5a5a"/><stop offset="1" stop-color="#2e2e2e"/></linearGradient><linearGradient id="gBlank" x1="0" x2="0" y1="0" y2="1"><stop offset="0" stop-color="#9c9c9c"/><stop offset="1" stop-color="#747474"/></linearGradient><linearGradient id="gCtrl" x1="0" x2="0" y1="0" y2="1"><stop offset="0" stop-color="#8e8e8e"/><stop offset="1" stop-color="#6a6a6a"/></linearGradient><linearGradient id="gDrive" x1="0" x2="1" y1="0" y2="0"><stop offset="0" stop-color="#7a7a7a"/><stop offset="0.45" stop-color="#5e5e5e"/><stop offset="1" stop-color="#464646"/></linearGradient><linearGradient id="gBand" x1="0" x2="0" y1="0" y2="1"><stop offset="0" stop-color="#454545"/><stop offset="1" stop-color="#262626"/></linearGradient></defs><rect x="0" y="0" width="455" height="165" fill="#161616"/><rect x="0" y="0" width="18.5" height="165" fill="url(#gEar)"/><rect x="0" y="0" width="18.5" height="165" fill="none" stroke="#111" stroke-width="1.6"/><rect x="1.5" y="7" width="13" height="9" rx="2" fill="#d8d8d8"/><rect x="1" y="96" width="17" height="18" fill="#8a8a8a"/><rect x="19" y="0" width="3" height="165" fill="#8e8e8e"/><rect x="433" y="0" width="22" height="165" fill="#262626"/><rect x="437.5" y="0" width="3" height="165" fill="#6a6a6a"/><rect x="441" y="96" width="13" height="18" fill="#3c3c3c"/><rect x="443" y="6" width="9" height="2" fill="#888"/><rect x="442" y="11" width="11" height="1.5" fill="#777"/><rect x="21" y="1.5" width="145" height="86" fill="#2a2a2a"/><rect x="22.5" y="2.5" width="142" height="16" fill="url(#gCtrl)"/><circle cx="33.8" cy="12" r="2.6" fill="#1e1e1e" stroke="#aaa" stroke-width="0.7"/><circle cx="43.7" cy="14.2" r="1.4" fill="#2a2a2a"/><circle cx="49.6" cy="14.2" r="1.4" fill="#2a2a2a"/><circle cx="55.5" cy="14.2" r="1.4" fill="#2a2a2a"/><circle cx="61.4" cy="14.2" r="1.4" fill="#2a2a2a"/><circle cx="70.2" cy="12.5" r="5" fill="#777" stroke="#333" stroke-width="1"/><rect x="84.5" y="8" width="12.8" height="7.4" fill="#1c1c1c"/><rect x="86" y="9.5" width="9" height="3" fill="#666"/><rect x="108.6" y="8" width="12.3" height="7.4" fill="#1c1c1c"/><rect x="110" y="9.5" width="9" height="3" fill="#666"/><rect x="127.2" y="5.5" width="27.6" height="12.5" rx="6" fill="#b9bddc"/><rect x="134" y="8" width="14.9" height="7.5" rx="3" fill="#3f4a9a"/><rect x="27.5" y="20.5" width="130.5" height="7" rx="1.5" fill="#cfcfcf" stroke="#222" stroke-width="0.8"/><rect x="29.5" y="27.7" width="127" height="14" fill="#141414"/><rect x="33.8" y="29.5" width="120" height="10.5" fill="#4a4a4a"/><rect x="36" y="31" width="30" height="6" fill="#5c5c5c"/><rect x="22.5" y="43.4" width="142" height="42.3" fill="url(#gBlank)"/><rect x="23" y="55" width="3.5" height="19" fill="#333"/><rect x="160.5" y="55" width="3.5" height="19" fill="#333"/><rect x="165.9" y="0.5" width="267" height="87.5" fill="#1e1e1e"/><rect x="165.9" y="0.5" width="267" height="2.5" fill="#777"/><rect x="166.80" y="16.4" width="14.2" height="63.6" fill="url(#gDrive)"/><rect x="166.80" y="5.5" width="14.2" height="11" fill="#dcdcdc"/><rect x="168.80" y="11" width="10" height="2" fill="#777"/><rect x="169.30" y="20" width="1.2" height="56" fill="#9a9a9a"/><rect x="167.90" y="58.5" width="12" height="14.5" rx="3" fill="#7c4350"/><rect x="169.90" y="61.5" width="8" height="7.5" rx="2" fill="#b07888"/><rect x="167.90" y="73" width="12" height="7" fill="#2a2a2a"/><circle cx="173.90" cy="85" r="1.1" fill="#bbb"/><rect x="183.20" y="16.4" width="14.2" height="63.6" fill="url(#gDrive)"/><rect x="183.20" y="5.5" width="14.2" height="11" fill="#dcdcdc"/><rect x="185.20" y="11" width="10" height="2" fill="#777"/><rect x="185.70" y="20" width="1.2" height="56" fill="#9a9a9a"/><rect x="184.30" y="58.5" width="12" height="14.5" rx="3" fill="#7c4350"/><rect x="186.30" y="61.5" width="8" height="7.5" rx="2" fill="#b07888"/><rect x="184.30" y="73" width="12" height="7" fill="#2a2a2a"/><circle cx="190.30" cy="85" r="1.1" fill="#bbb"/><rect x="199.60" y="16.4" width="14.2" height="63.6" fill="url(#gDrive)"/><rect x="199.60" y="5.5" width="14.2" height="11" fill="#dcdcdc"/><rect x="201.60" y="11" width="10" height="2" fill="#777"/><rect x="202.10" y="20" width="1.2" height="56" fill="#9a9a9a"/><rect x="200.70" y="58.5" width="12" height="14.5" rx="3" fill="#7c4350"/><rect x="202.70" y="61.5" width="8" height="7.5" rx="2" fill="#b07888"/><rect x="200.70" y="73" width="12" height="7" fill="#2a2a2a"/><circle cx="206.70" cy="85" r="1.1" fill="#bbb"/><rect x="216.00" y="16.4" width="14.2" height="63.6" fill="url(#gDrive)"/><rect x="216.00" y="5.5" width="14.2" height="11" fill="#dcdcdc"/><rect x="218.00" y="11" width="10" height="2" fill="#777"/><rect x="218.50" y="20" width="1.2" height="56" fill="#9a9a9a"/><rect x="217.10" y="58.5" width="12" height="14.5" rx="3" fill="#7c4350"/><rect x="219.10" y="61.5" width="8" height="7.5" rx="2" fill="#b07888"/><rect x="217.10" y="73" width="12" height="7" fill="#2a2a2a"/><circle cx="223.10" cy="85" r="1.1" fill="#bbb"/><rect x="232.40" y="16.4" width="14.2" height="63.6" fill="url(#gDrive)"/><rect x="232.40" y="5.5" width="14.2" height="11" fill="#dcdcdc"/><rect x="234.40" y="11" width="10" height="2" fill="#777"/><rect x="234.90" y="20" width="1.2" height="56" fill="#9a9a9a"/><rect x="233.50" y="58.5" width="12" height="14.5" rx="3" fill="#7c4350"/><rect x="235.50" y="61.5" width="8" height="7.5" rx="2" fill="#b07888"/><rect x="233.50" y="73" width="12" height="7" fill="#2a2a2a"/><circle cx="239.50" cy="85" r="1.1" fill="#bbb"/><rect x="248.80" y="16.4" width="14.2" height="63.6" fill="url(#gDrive)"/><rect x="248.80" y="5.5" width="14.2" height="11" fill="#dcdcdc"/><rect x="250.80" y="11" width="10" height="2" fill="#777"/><rect x="251.30" y="20" width="1.2" height="56" fill="#9a9a9a"/><rect x="249.90" y="58.5" width="12" height="14.5" rx="3" fill="#7c4350"/><rect x="251.90" y="61.5" width="8" height="7.5" rx="2" fill="#b07888"/><rect x="249.90" y="73" width="12" height="7" fill="#2a2a2a"/><circle cx="255.90" cy="85" r="1.1" fill="#bbb"/><rect x="265.20" y="16.4" width="14.2" height="63.6" fill="url(#gDrive)"/><rect x="265.20" y="5.5" width="14.2" height="11" fill="#dcdcdc"/><rect x="267.20" y="11" width="10" height="2" fill="#777"/><rect x="267.70" y="20" width="1.2" height="56" fill="#9a9a9a"/><rect x="266.30" y="58.5" width="12" height="14.5" rx="3" fill="#7c4350"/><rect x="268.30" y="61.5" width="8" height="7.5" rx="2" fill="#b07888"/><rect x="266.30" y="73" width="12" height="7" fill="#2a2a2a"/><circle cx="272.30" cy="85" r="1.1" fill="#bbb"/><rect x="281.60" y="16.4" width="14.2" height="63.6" fill="url(#gDrive)"/><rect x="281.60" y="5.5" width="14.2" height="11" fill="#dcdcdc"/><rect x="283.60" y="11" width="10" height="2" fill="#777"/><rect x="284.10" y="20" width="1.2" height="56" fill="#9a9a9a"/><rect x="282.70" y="58.5" width="12" height="14.5" rx="3" fill="#7c4350"/><rect x="284.70" y="61.5" width="8" height="7.5" rx="2" fill="#b07888"/><rect x="282.70" y="73" width="12" height="7" fill="#2a2a2a"/><circle cx="288.70" cy="85" r="1.1" fill="#bbb"/><rect x="298.00" y="16.4" width="14.2" height="63.6" fill="url(#gDrive)"/><rect x="298.00" y="5.5" width="14.2" height="11" fill="#cfcbe0"/><rect x="300.00" y="11" width="10" height="2" fill="#777"/><rect x="300.50" y="20" width="1.2" height="56" fill="#9a9a9a"/><rect x="299.10" y="58.5" width="12" height="14.5" rx="3" fill="#7c4350"/><rect x="301.10" y="61.5" width="8" height="7.5" rx="2" fill="#b07888"/><rect x="299.10" y="73" width="12" height="7" fill="#2a2a2a"/><circle cx="305.10" cy="85" r="1.1" fill="#bbb"/><rect x="314.40" y="16.4" width="14.2" height="63.6" fill="url(#gDrive)"/><rect x="314.40" y="5.5" width="14.2" height="11" fill="#cfcbe0"/><rect x="316.40" y="11" width="10" height="2" fill="#777"/><rect x="316.90" y="20" width="1.2" height="56" fill="#9a9a9a"/><rect x="315.50" y="58.5" width="12" height="14.5" rx="3" fill="#7c4350"/><rect x="317.50" y="61.5" width="8" height="7.5" rx="2" fill="#b07888"/><rect x="315.50" y="73" width="12" height="7" fill="#2a2a2a"/><circle cx="321.50" cy="85" r="1.1" fill="#bbb"/><rect x="330.80" y="16.4" width="14.2" height="63.6" fill="url(#gDrive)"/><rect x="330.80" y="5.5" width="14.2" height="11" fill="#cfcbe0"/><rect x="332.80" y="11" width="10" height="2" fill="#777"/><rect x="333.30" y="20" width="1.2" height="56" fill="#9a9a9a"/><rect x="331.90" y="58.5" width="12" height="14.5" rx="3" fill="#7c4350"/><rect x="333.90" y="61.5" width="8" height="7.5" rx="2" fill="#b07888"/><rect x="331.90" y="73" width="12" height="7" fill="#2a2a2a"/><circle cx="337.90" cy="85" r="1.1" fill="#bbb"/><rect x="347.20" y="16.4" width="14.2" height="63.6" fill="url(#gDrive)"/><rect x="347.20" y="5.5" width="14.2" height="11" fill="#cfcbe0"/><rect x="349.20" y="11" width="10" height="2" fill="#777"/><rect x="349.70" y="20" width="1.2" height="56" fill="#9a9a9a"/><rect x="348.30" y="58.5" width="12" height="14.5" rx="3" fill="#7c4350"/><rect x="350.30" y="61.5" width="8" height="7.5" rx="2" fill="#b07888"/><rect x="348.30" y="73" width="12" height="7" fill="#2a2a2a"/><circle cx="354.30" cy="85" r="1.1" fill="#bbb"/><rect x="363.60" y="16.4" width="14.2" height="63.6" fill="url(#gDrive)"/><rect x="363.60" y="5.5" width="14.2" height="11" fill="#cfcbe0"/><rect x="365.60" y="11" width="10" height="2" fill="#777"/><rect x="366.10" y="20" width="1.2" height="56" fill="#9a9a9a"/><rect x="364.70" y="58.5" width="12" height="14.5" rx="3" fill="#7c4350"/><rect x="366.70" y="61.5" width="8" height="7.5" rx="2" fill="#b07888"/><rect x="364.70" y="73" width="12" height="7" fill="#2a2a2a"/><circle cx="370.70" cy="85" r="1.1" fill="#bbb"/><rect x="380.00" y="16.4" width="14.2" height="63.6" fill="url(#gDrive)"/><rect x="380.00" y="5.5" width="14.2" height="11" fill="#cfcbe0"/><rect x="382.00" y="11" width="10" height="2" fill="#777"/><rect x="382.50" y="20" width="1.2" height="56" fill="#9a9a9a"/><rect x="381.10" y="58.5" width="12" height="14.5" rx="3" fill="#7c4350"/><rect x="383.10" y="61.5" width="8" height="7.5" rx="2" fill="#b07888"/><rect x="381.10" y="73" width="12" height="7" fill="#2a2a2a"/><circle cx="387.10" cy="85" r="1.1" fill="#bbb"/><rect x="396.40" y="16.4" width="14.2" height="63.6" fill="url(#gDrive)"/><rect x="396.40" y="5.5" width="14.2" height="11" fill="#cfcbe0"/><rect x="398.40" y="11" width="10" height="2" fill="#777"/><rect x="398.90" y="20" width="1.2" height="56" fill="#9a9a9a"/><rect x="397.50" y="58.5" width="12" height="14.5" rx="3" fill="#7c4350"/><rect x="399.50" y="61.5" width="8" height="7.5" rx="2" fill="#b07888"/><rect x="397.50" y="73" width="12" height="7" fill="#2a2a2a"/><circle cx="403.50" cy="85" r="1.1" fill="#bbb"/><rect x="412.80" y="16.4" width="14.2" height="63.6" fill="url(#gDrive)"/><rect x="412.80" y="5.5" width="14.2" height="11" fill="#cfcbe0"/><rect x="414.80" y="11" width="10" height="2" fill="#777"/><rect x="415.30" y="20" width="1.2" height="56" fill="#9a9a9a"/><rect x="413.90" y="58.5" width="12" height="14.5" rx="3" fill="#7c4350"/><rect x="415.90" y="61.5" width="8" height="7.5" rx="2" fill="#b07888"/><rect x="413.90" y="73" width="12" height="7" fill="#2a2a2a"/><circle cx="419.90" cy="85" r="1.1" fill="#bbb"/><rect x="165.9" y="80" width="267" height="2" fill="#8a8a8a"/><rect x="21" y="86.2" width="412" height="4.5" fill="#0e0e0e"/><rect x="22" y="90.6" width="411" height="15" fill="url(#gBand)"/><rect x="213.2" y="90.6" width="23.3" height="10.5" rx="1.5" fill="#4a6790"/><rect x="207" y="101" width="36" height="5" fill="#202020"/><rect x="22" y="105.6" width="411" height="59.4" fill="#1a1a1a"/><rect x="36.8" y="106.4" width="381" height="57" fill="#060606"/><rect x="38.5" y="112.3" width="377" height="1.6" fill="#4c4c4c"/><circle cx="40.7" cy="113.1" r="1.1" fill="#cfcfcf"/><rect x="38.5" y="117.9" width="377" height="1.6" fill="#4c4c4c"/><circle cx="40.7" cy="118.7" r="1.1" fill="#cfcfcf"/><rect x="38.5" y="123.5" width="377" height="1.6" fill="#4c4c4c"/><circle cx="40.7" cy="124.3" r="1.1" fill="#cfcfcf"/><rect x="38.5" y="129.1" width="377" height="1.6" fill="#4c4c4c"/><circle cx="40.7" cy="129.9" r="1.1" fill="#cfcfcf"/><rect x="38.5" y="134.7" width="377" height="1.6" fill="#4c4c4c"/><circle cx="40.7" cy="135.5" r="1.1" fill="#cfcfcf"/><rect x="38.5" y="140.3" width="377" height="1.6" fill="#4c4c4c"/><circle cx="40.7" cy="141.1" r="1.1" fill="#cfcfcf"/><rect x="38.5" y="145.9" width="377" height="1.6" fill="#4c4c4c"/><circle cx="40.7" cy="146.7" r="1.1" fill="#cfcfcf"/><rect x="38.5" y="151.5" width="377" height="1.6" fill="#4c4c4c"/><circle cx="40.7" cy="152.3" r="1.1" fill="#cfcfcf"/><rect x="38.5" y="157.1" width="377" height="1.6" fill="#4c4c4c"/><circle cx="40.7" cy="157.9" r="1.1" fill="#cfcfcf"/><rect x="38.5" y="162.7" width="377" height="1.6" fill="#4c4c4c"/><circle cx="40.7" cy="163.5" r="1.1" fill="#cfcfcf"/><rect x="101.7" y="106.4" width="1.5" height="57" fill="#3e3e3e"/><rect x="163.6" y="106.4" width="1.5" height="57" fill="#3e3e3e"/><rect x="225.5" y="106.4" width="1.5" height="57" fill="#3e3e3e"/><rect x="287.4" y="106.4" width="1.5" height="57" fill="#3e3e3e"/><rect x="349.3" y="106.4" width="1.5" height="57" fill="#3e3e3e"/><rect x="22" y="106" width="14.8" height="59" fill="#222"/><rect x="417.8" y="106" width="15" height="59" fill="#262626"/></svg>
<div class="r" style="left:518.0px;top:1191.60px;width:6.8px;height:165.8px;background:#5ab552"></div>
<svg class="r" style="left:58.5px;top:1361.70px" width="455.6" height="165.8" viewBox="0 0 455 165"><defs><linearGradient id="gEar" x1="0" x2="1" y1="0" y2="0"><stop offset="0" stop-color="#2a2a2a"/><stop offset="0.25" stop-color="#6e6e6e"/><stop offset="0.7" stop-color="#5a5a5a"/><stop offset="1" stop-color="#2e2e2e"/></linearGradient><linearGradient id="gBlank" x1="0" x2="0" y1="0" y2="1"><stop offset="0" stop-color="#9c9c9c"/><stop offset="1" stop-color="#747474"/></linearGradient><linearGradient id="gCtrl" x1="0" x2="0" y1="0" y2="1"><stop offset="0" stop-color="#8e8e8e"/><stop offset="1" stop-color="#6a6a6a"/></linearGradient><linearGradient id="gDrive" x1="0" x2="1" y1="0" y2="0"><stop offset="0" stop-color="#7a7a7a"/><stop offset="0.45" stop-color="#5e5e5e"/><stop offset="1" stop-color="#464646"/></linearGradient><linearGradient id="gBand" x1="0" x2="0" y1="0" y2="1"><stop offset="0" stop-color="#454545"/><stop offset="1" stop-color="#262626"/></linearGradient></defs><rect x="0" y="0" width="455" height="165" fill="#161616"/><rect x="0" y="0" width="18.5" height="165" fill="url(#gEar)"/><rect x="0" y="0" width="18.5" height="165" fill="none" stroke="#111" stroke-width="1.6"/><rect x="1.5" y="7" width="13" height="9" rx="2" fill="#d8d8d8"/><rect x="1" y="96" width="17" height="18" fill="#8a8a8a"/><rect x="19" y="0" width="3" height="165" fill="#8e8e8e"/><rect x="433" y="0" width="22" height="165" fill="#262626"/><rect x="437.5" y="0" width="3" height="165" fill="#6a6a6a"/><rect x="441" y="96" width="13" height="18" fill="#3c3c3c"/><rect x="443" y="6" width="9" height="2" fill="#888"/><rect x="442" y="11" width="11" height="1.5" fill="#777"/><rect x="21" y="1.5" width="145" height="86" fill="#2a2a2a"/><rect x="22.5" y="2.5" width="142" height="16" fill="url(#gCtrl)"/><circle cx="33.8" cy="12" r="2.6" fill="#1e1e1e" stroke="#aaa" stroke-width="0.7"/><circle cx="43.7" cy="14.2" r="1.4" fill="#2a2a2a"/><circle cx="49.6" cy="14.2" r="1.4" fill="#2a2a2a"/><circle cx="55.5" cy="14.2" r="1.4" fill="#2a2a2a"/><circle cx="61.4" cy="14.2" r="1.4" fill="#2a2a2a"/><circle cx="70.2" cy="12.5" r="5" fill="#777" stroke="#333" stroke-width="1"/><rect x="84.5" y="8" width="12.8" height="7.4" fill="#1c1c1c"/><rect x="86" y="9.5" width="9" height="3" fill="#666"/><rect x="108.6" y="8" width="12.3" height="7.4" fill="#1c1c1c"/><rect x="110" y="9.5" width="9" height="3" fill="#666"/><rect x="127.2" y="5.5" width="27.6" height="12.5" rx="6" fill="#b9bddc"/><rect x="134" y="8" width="14.9" height="7.5" rx="3" fill="#3f4a9a"/><rect x="27.5" y="20.5" width="130.5" height="7" rx="1.5" fill="#cfcfcf" stroke="#222" stroke-width="0.8"/><rect x="29.5" y="27.7" width="127" height="14" fill="#141414"/><rect x="33.8" y="29.5" width="120" height="10.5" fill="#4a4a4a"/><rect x="36" y="31" width="30" height="6" fill="#5c5c5c"/><rect x="22.5" y="43.4" width="142" height="42.3" fill="url(#gBlank)"/><rect x="23" y="55" width="3.5" height="19" fill="#333"/><rect x="160.5" y="55" width="3.5" height="19" fill="#333"/><rect x="165.9" y="0.5" width="267" height="87.5" fill="#1e1e1e"/><rect x="165.9" y="0.5" width="267" height="2.5" fill="#777"/><rect x="166.80" y="16.4" width="14.2" height="63.6" fill="url(#gDrive)"/><rect x="166.80" y="5.5" width="14.2" height="11" fill="#dcdcdc"/><rect x="168.80" y="11" width="10" height="2" fill="#777"/><rect x="169.30" y="20" width="1.2" height="56" fill="#9a9a9a"/><rect x="167.90" y="58.5" width="12" height="14.5" rx="3" fill="#7c4350"/><rect x="169.90" y="61.5" width="8" height="7.5" rx="2" fill="#b07888"/><rect x="167.90" y="73" width="12" height="7" fill="#2a2a2a"/><circle cx="173.90" cy="85" r="1.1" fill="#bbb"/><rect x="183.20" y="16.4" width="14.2" height="63.6" fill="url(#gDrive)"/><rect x="183.20" y="5.5" width="14.2" height="11" fill="#dcdcdc"/><rect x="185.20" y="11" width="10" height="2" fill="#777"/><rect x="185.70" y="20" width="1.2" height="56" fill="#9a9a9a"/><rect x="184.30" y="58.5" width="12" height="14.5" rx="3" fill="#7c4350"/><rect x="186.30" y="61.5" width="8" height="7.5" rx="2" fill="#b07888"/><rect x="184.30" y="73" width="12" height="7" fill="#2a2a2a"/><circle cx="190.30" cy="85" r="1.1" fill="#bbb"/><rect x="199.60" y="16.4" width="14.2" height="63.6" fill="url(#gDrive)"/><rect x="199.60" y="5.5" width="14.2" height="11" fill="#dcdcdc"/><rect x="201.60" y="11" width="10" height="2" fill="#777"/><rect x="202.10" y="20" width="1.2" height="56" fill="#9a9a9a"/><rect x="200.70" y="58.5" width="12" height="14.5" rx="3" fill="#7c4350"/><rect x="202.70" y="61.5" width="8" height="7.5" rx="2" fill="#b07888"/><rect x="200.70" y="73" width="12" height="7" fill="#2a2a2a"/><circle cx="206.70" cy="85" r="1.1" fill="#bbb"/><rect x="216.00" y="16.4" width="14.2" height="63.6" fill="url(#gDrive)"/><rect x="216.00" y="5.5" width="14.2" height="11" fill="#dcdcdc"/><rect x="218.00" y="11" width="10" height="2" fill="#777"/><rect x="218.50" y="20" width="1.2" height="56" fill="#9a9a9a"/><rect x="217.10" y="58.5" width="12" height="14.5" rx="3" fill="#7c4350"/><rect x="219.10" y="61.5" width="8" height="7.5" rx="2" fill="#b07888"/><rect x="217.10" y="73" width="12" height="7" fill="#2a2a2a"/><circle cx="223.10" cy="85" r="1.1" fill="#bbb"/><rect x="232.40" y="16.4" width="14.2" height="63.6" fill="url(#gDrive)"/><rect x="232.40" y="5.5" width="14.2" height="11" fill="#dcdcdc"/><rect x="234.40" y="11" width="10" height="2" fill="#777"/><rect x="234.90" y="20" width="1.2" height="56" fill="#9a9a9a"/><rect x="233.50" y="58.5" width="12" height="14.5" rx="3" fill="#7c4350"/><rect x="235.50" y="61.5" width="8" height="7.5" rx="2" fill="#b07888"/><rect x="233.50" y="73" width="12" height="7" fill="#2a2a2a"/><circle cx="239.50" cy="85" r="1.1" fill="#bbb"/><rect x="248.80" y="16.4" width="14.2" height="63.6" fill="url(#gDrive)"/><rect x="248.80" y="5.5" width="14.2" height="11" fill="#dcdcdc"/><rect x="250.80" y="11" width="10" height="2" fill="#777"/><rect x="251.30" y="20" width="1.2" height="56" fill="#9a9a9a"/><rect x="249.90" y="58.5" width="12" height="14.5" rx="3" fill="#7c4350"/><rect x="251.90" y="61.5" width="8" height="7.5" rx="2" fill="#b07888"/><rect x="249.90" y="73" width="12" height="7" fill="#2a2a2a"/><circle cx="255.90" cy="85" r="1.1" fill="#bbb"/><rect x="265.20" y="16.4" width="14.2" height="63.6" fill="url(#gDrive)"/><rect x="265.20" y="5.5" width="14.2" height="11" fill="#dcdcdc"/><rect x="267.20" y="11" width="10" height="2" fill="#777"/><rect x="267.70" y="20" width="1.2" height="56" fill="#9a9a9a"/><rect x="266.30" y="58.5" width="12" height="14.5" rx="3" fill="#7c4350"/><rect x="268.30" y="61.5" width="8" height="7.5" rx="2" fill="#b07888"/><rect x="266.30" y="73" width="12" height="7" fill="#2a2a2a"/><circle cx="272.30" cy="85" r="1.1" fill="#bbb"/><rect x="281.60" y="16.4" width="14.2" height="63.6" fill="url(#gDrive)"/><rect x="281.60" y="5.5" width="14.2" height="11" fill="#dcdcdc"/><rect x="283.60" y="11" width="10" height="2" fill="#777"/><rect x="284.10" y="20" width="1.2" height="56" fill="#9a9a9a"/><rect x="282.70" y="58.5" width="12" height="14.5" rx="3" fill="#7c4350"/><rect x="284.70" y="61.5" width="8" height="7.5" rx="2" fill="#b07888"/><rect x="282.70" y="73" width="12" height="7" fill="#2a2a2a"/><circle cx="288.70" cy="85" r="1.1" fill="#bbb"/><rect x="298.00" y="16.4" width="14.2" height="63.6" fill="url(#gDrive)"/><rect x="298.00" y="5.5" width="14.2" height="11" fill="#cfcbe0"/><rect x="300.00" y="11" width="10" height="2" fill="#777"/><rect x="300.50" y="20" width="1.2" height="56" fill="#9a9a9a"/><rect x="299.10" y="58.5" width="12" height="14.5" rx="3" fill="#7c4350"/><rect x="301.10" y="61.5" width="8" height="7.5" rx="2" fill="#b07888"/><rect x="299.10" y="73" width="12" height="7" fill="#2a2a2a"/><circle cx="305.10" cy="85" r="1.1" fill="#bbb"/><rect x="314.40" y="16.4" width="14.2" height="63.6" fill="url(#gDrive)"/><rect x="314.40" y="5.5" width="14.2" height="11" fill="#cfcbe0"/><rect x="316.40" y="11" width="10" height="2" fill="#777"/><rect x="316.90" y="20" width="1.2" height="56" fill="#9a9a9a"/><rect x="315.50" y="58.5" width="12" height="14.5" rx="3" fill="#7c4350"/><rect x="317.50" y="61.5" width="8" height="7.5" rx="2" fill="#b07888"/><rect x="315.50" y="73" width="12" height="7" fill="#2a2a2a"/><circle cx="321.50" cy="85" r="1.1" fill="#bbb"/><rect x="330.80" y="16.4" width="14.2" height="63.6" fill="url(#gDrive)"/><rect x="330.80" y="5.5" width="14.2" height="11" fill="#cfcbe0"/><rect x="332.80" y="11" width="10" height="2" fill="#777"/><rect x="333.30" y="20" width="1.2" height="56" fill="#9a9a9a"/><rect x="331.90" y="58.5" width="12" height="14.5" rx="3" fill="#7c4350"/><rect x="333.90" y="61.5" width="8" height="7.5" rx="2" fill="#b07888"/><rect x="331.90" y="73" width="12" height="7" fill="#2a2a2a"/><circle cx="337.90" cy="85" r="1.1" fill="#bbb"/><rect x="347.20" y="16.4" width="14.2" height="63.6" fill="url(#gDrive)"/><rect x="347.20" y="5.5" width="14.2" height="11" fill="#cfcbe0"/><rect x="349.20" y="11" width="10" height="2" fill="#777"/><rect x="349.70" y="20" width="1.2" height="56" fill="#9a9a9a"/><rect x="348.30" y="58.5" width="12" height="14.5" rx="3" fill="#7c4350"/><rect x="350.30" y="61.5" width="8" height="7.5" rx="2" fill="#b07888"/><rect x="348.30" y="73" width="12" height="7" fill="#2a2a2a"/><circle cx="354.30" cy="85" r="1.1" fill="#bbb"/><rect x="363.60" y="16.4" width="14.2" height="63.6" fill="url(#gDrive)"/><rect x="363.60" y="5.5" width="14.2" height="11" fill="#cfcbe0"/><rect x="365.60" y="11" width="10" height="2" fill="#777"/><rect x="366.10" y="20" width="1.2" height="56" fill="#9a9a9a"/><rect x="364.70" y="58.5" width="12" height="14.5" rx="3" fill="#7c4350"/><rect x="366.70" y="61.5" width="8" height="7.5" rx="2" fill="#b07888"/><rect x="364.70" y="73" width="12" height="7" fill="#2a2a2a"/><circle cx="370.70" cy="85" r="1.1" fill="#bbb"/><rect x="380.00" y="16.4" width="14.2" height="63.6" fill="url(#gDrive)"/><rect x="380.00" y="5.5" width="14.2" height="11" fill="#cfcbe0"/><rect x="382.00" y="11" width="10" height="2" fill="#777"/><rect x="382.50" y="20" width="1.2" height="56" fill="#9a9a9a"/><rect x="381.10" y="58.5" width="12" height="14.5" rx="3" fill="#7c4350"/><rect x="383.10" y="61.5" width="8" height="7.5" rx="2" fill="#b07888"/><rect x="381.10" y="73" width="12" height="7" fill="#2a2a2a"/><circle cx="387.10" cy="85" r="1.1" fill="#bbb"/><rect x="396.40" y="16.4" width="14.2" height="63.6" fill="url(#gDrive)"/><rect x="396.40" y="5.5" width="14.2" height="11" fill="#cfcbe0"/><rect x="398.40" y="11" width="10" height="2" fill="#777"/><rect x="398.90" y="20" width="1.2" height="56" fill="#9a9a9a"/><rect x="397.50" y="58.5" width="12" height="14.5" rx="3" fill="#7c4350"/><rect x="399.50" y="61.5" width="8" height="7.5" rx="2" fill="#b07888"/><rect x="397.50" y="73" width="12" height="7" fill="#2a2a2a"/><circle cx="403.50" cy="85" r="1.1" fill="#bbb"/><rect x="412.80" y="16.4" width="14.2" height="63.6" fill="url(#gDrive)"/><rect x="412.80" y="5.5" width="14.2" height="11" fill="#cfcbe0"/><rect x="414.80" y="11" width="10" height="2" fill="#777"/><rect x="415.30" y="20" width="1.2" height="56" fill="#9a9a9a"/><rect x="413.90" y="58.5" width="12" height="14.5" rx="3" fill="#7c4350"/><rect x="415.90" y="61.5" width="8" height="7.5" rx="2" fill="#b07888"/><rect x="413.90" y="73" width="12" height="7" fill="#2a2a2a"/><circle cx="419.90" cy="85" r="1.1" fill="#bbb"/><rect x="165.9" y="80" width="267" height="2" fill="#8a8a8a"/><rect x="21" y="86.2" width="412" height="4.5" fill="#0e0e0e"/><rect x="22" y="90.6" width="411" height="15" fill="url(#gBand)"/><rect x="213.2" y="90.6" width="23.3" height="10.5" rx="1.5" fill="#4a6790"/><rect x="207" y="101" width="36" height="5" fill="#202020"/><rect x="22" y="105.6" width="411" height="59.4" fill="#1a1a1a"/><rect x="36.8" y="106.4" width="381" height="57" fill="#060606"/><rect x="38.5" y="112.3" width="377" height="1.6" fill="#4c4c4c"/><circle cx="40.7" cy="113.1" r="1.1" fill="#cfcfcf"/><rect x="38.5" y="117.9" width="377" height="1.6" fill="#4c4c4c"/><circle cx="40.7" cy="118.7" r="1.1" fill="#cfcfcf"/><rect x="38.5" y="123.5" width="377" height="1.6" fill="#4c4c4c"/><circle cx="40.7" cy="124.3" r="1.1" fill="#cfcfcf"/><rect x="38.5" y="129.1" width="377" height="1.6" fill="#4c4c4c"/><circle cx="40.7" cy="129.9" r="1.1" fill="#cfcfcf"/><rect x="38.5" y="134.7" width="377" height="1.6" fill="#4c4c4c"/><circle cx="40.7" cy="135.5" r="1.1" fill="#cfcfcf"/><rect x="38.5" y="140.3" width="377" height="1.6" fill="#4c4c4c"/><circle cx="40.7" cy="141.1" r="1.1" fill="#cfcfcf"/><rect x="38.5" y="145.9" width="377" height="1.6" fill="#4c4c4c"/><circle cx="40.7" cy="146.7" r="1.1" fill="#cfcfcf"/><rect x="38.5" y="151.5" width="377" height="1.6" fill="#4c4c4c"/><circle cx="40.7" cy="152.3" r="1.1" fill="#cfcfcf"/><rect x="38.5" y="157.1" width="377" height="1.6" fill="#4c4c4c"/><circle cx="40.7" cy="157.9" r="1.1" fill="#cfcfcf"/><rect x="38.5" y="162.7" width="377" height="1.6" fill="#4c4c4c"/><circle cx="40.7" cy="163.5" r="1.1" fill="#cfcfcf"/><rect x="101.7" y="106.4" width="1.5" height="57" fill="#3e3e3e"/><rect x="163.6" y="106.4" width="1.5" height="57" fill="#3e3e3e"/><rect x="225.5" y="106.4" width="1.5" height="57" fill="#3e3e3e"/><rect x="287.4" y="106.4" width="1.5" height="57" fill="#3e3e3e"/><rect x="349.3" y="106.4" width="1.5" height="57" fill="#3e3e3e"/><rect x="22" y="106" width="14.8" height="59" fill="#222"/><rect x="417.8" y="106" width="15" height="59" fill="#262626"/></svg>
<div class="r" style="left:518.0px;top:1361.70px;width:6.8px;height:165.8px;background:#5ab552"></div>
</div>
<div class="t" style="left:1402.83px;top:615.83px;font-size:45.49px;line-height:45.49px;color:#2b3137;font-weight:400;transform:scaleX(0.9577);-webkit-text-stroke:1.30px #2b3137;">Rack Space KPIs</div>
<div class="t" style="left:1475.18px;top:755.65px;font-size:29.94px;line-height:29.94px;color:#636363;font-weight:400;transform:scaleX(0.9783);">Rack Space Efficiency</div>
<div class="t" style="left:1475.17px;top:811.53px;font-size:30.09px;line-height:30.09px;color:#636363;font-weight:400;transform:scaleX(0.9796);">Rack Utilization</div>
<div class="t" style="left:2183.40px;top:738.05px;font-size:41.28px;line-height:41.28px;color:#6391bb;font-weight:400;transform:scaleX(0.9668);">56 %</div>
<div class="t" style="left:2294.63px;top:813.05px;font-size:41.28px;line-height:41.28px;color:#e9ad62;font-weight:400;transform:scaleX(0.9547);">70 %</div>
<div class="t" style="left:1404.82px;top:1298.56px;font-size:42.15px;line-height:42.15px;color:#2b3137;font-weight:400;transform:scaleX(1.0554);-webkit-text-stroke:1.30px #2b3137;">Rack Space Availability</div>
<div class="t" style="left:1474.94px;top:1457.85px;font-size:29.94px;line-height:29.94px;color:#636363;font-weight:400;transform:scaleX(0.9798);">Total Available Rack Space</div>
<div class="t" style="left:1474.07px;top:1513.45px;font-size:29.94px;line-height:29.94px;color:#636363;font-weight:400;transform:scaleX(0.9833);">Largest Available</div>
<div class="t" style="left:1475.02px;top:1541.95px;font-size:29.94px;line-height:29.94px;color:#636363;font-weight:400;transform:scaleX(0.9861);">Contiguous Rack Space</div>
<div class="t" style="left:2042.64px;top:1440.70px;font-size:39.68px;line-height:39.68px;color:#e9ad62;font-weight:400;transform:scaleX(0.9876);">23 RU</div>
<div class="t" style="left:1894.51px;top:1502.45px;font-size:41.28px;line-height:41.28px;color:#6391bb;font-weight:400;transform:scaleX(0.9329);">16 RU</div>
<svg class="ov" width="2501" height="2500" viewBox="0 0 2501 2500"><rect x="1429.6" y="756.9" width="29" height="28.7" fill="#efb66b"/><rect x="1429.6" y="812.8" width="29" height="28.7" fill="#70a0c8"/><path d="M2005.56,1093.84 A157.60,157.60 0 1 1 2244.50,889.77 L2202.76,920.09 A106.00,106.00 0 1 0 2042.05,1057.35 Z" fill="#efb66b"/><path d="M2244.50,889.77 A157.60,157.60 0 0 1 2228.44,1093.84 L2191.95,1057.35 A106.00,106.00 0 0 0 2202.76,920.09 Z" fill="#dfdfdf"/><path d="M2048.41,1050.99 A97.00,97.00 0 0 1 2144.06,889.25 L2129.83,938.23 A46.00,46.00 0 0 0 2084.47,1014.93 Z" fill="#70a0c8"/><path d="M2144.06,889.25 A97.00,97.00 0 0 1 2185.59,1050.99 L2149.53,1014.93 A46.00,46.00 0 0 0 2129.83,938.23 Z" fill="#dfdfdf"/><line x1="2202.76" y1="920.09" x2="2282.85" y2="861.90" stroke="#efb66b" stroke-width="3.4"/><line x1="2129.83" y1="938.23" x2="2174.19" y2="785.54" stroke="#70a0c8" stroke-width="3.4"/><rect x="1429.8" y="1458.6" width="29" height="29" fill="#efb66b"/><rect x="1429.8" y="1529" width="29" height="29" fill="#70a0c8"/><path d="M2053.67,1750.63 A131.00,131.00 0 0 1 2111.12,1531.81 L2121.86,1570.34 A91.00,91.00 0 0 0 2081.95,1722.35 Z" fill="#efb66b"/><path d="M2111.12,1531.81 A131.00,131.00 0 0 1 2238.93,1750.63 L2210.65,1722.35 A91.00,91.00 0 0 0 2121.86,1570.34 Z" fill="#dfdfdf"/><path d="M2089.73,1714.57 A80.00,80.00 0 0 1 2083.33,1608.66 L2115.21,1633.64 A39.50,39.50 0 0 0 2118.37,1685.93 Z" fill="#70a0c8"/><path d="M2083.33,1608.66 A80.00,80.00 0 1 1 2202.87,1714.57 L2174.23,1685.93 A39.50,39.50 0 1 0 2115.21,1633.64 Z" fill="#dfdfdf"/><line x1="2121.86" y1="1570.34" x2="2098.07" y2="1485.00" stroke="#efb66b" stroke-width="3.4"/><line x1="2115.21" y1="1633.64" x2="2004.92" y2="1547.24" stroke="#70a0c8" stroke-width="3.4"/></svg>
<div class="t" style="left:1405.37px;top:1977.58px;font-size:43.31px;line-height:43.31px;color:#2b3137;font-weight:400;transform:scaleX(1.0243);-webkit-text-stroke:1.30px #2b3137;">Summary</div>
<div class="t" style="left:1405.69px;top:2065.79px;font-size:31.54px;line-height:31.54px;color:#2b3137;font-weight:700;transform:scaleX(1.0621);">Status</div>
<div class="t" style="left:1567.55px;top:2065.79px;font-size:31.54px;line-height:31.54px;color:#57ad4f;font-weight:700;transform:scaleX(1.0583);">Normal</div>
<div class="t" style="left:1405.68px;top:2123.79px;font-size:31.54px;line-height:31.54px;color:#2b3137;font-weight:700;transform:scaleX(1.0832);">State</div>
<div class="t" style="left:1568.99px;top:2123.79px;font-size:31.54px;line-height:31.54px;color:#8e959d;font-weight:700;transform:scaleX(1.0311);">Active</div>
<div class="t" style="left:1404.19px;top:2318.08px;font-size:43.31px;line-height:43.31px;color:#2b3137;font-weight:400;transform:scaleX(1.0624);-webkit-text-stroke:1.30px #2b3137;">Properties</div>
<div class="t" style="left:1405.05px;top:2405.93px;font-size:31.98px;line-height:31.98px;color:#2b3137;font-weight:700;transform:scaleX(1.0434);">Name</div>
<div class="t" style="left:1686.75px;top:2405.93px;font-size:31.98px;line-height:31.98px;color:#2b3137;font-weight:400;transform:scaleX(1.0041);">Rack 2</div>
<div class="t" style="left:1405.10px;top:2464.23px;font-size:31.98px;line-height:31.98px;color:#2b3137;font-weight:700;transform:scaleX(1.0185);">Location</div>
<div class="t" style="left:1686.71px;top:2464.23px;font-size:31.98px;line-height:31.98px;color:#2b3137;font-weight:400;transform:scaleX(1.0211);">Folsom</div>
</body></html>
